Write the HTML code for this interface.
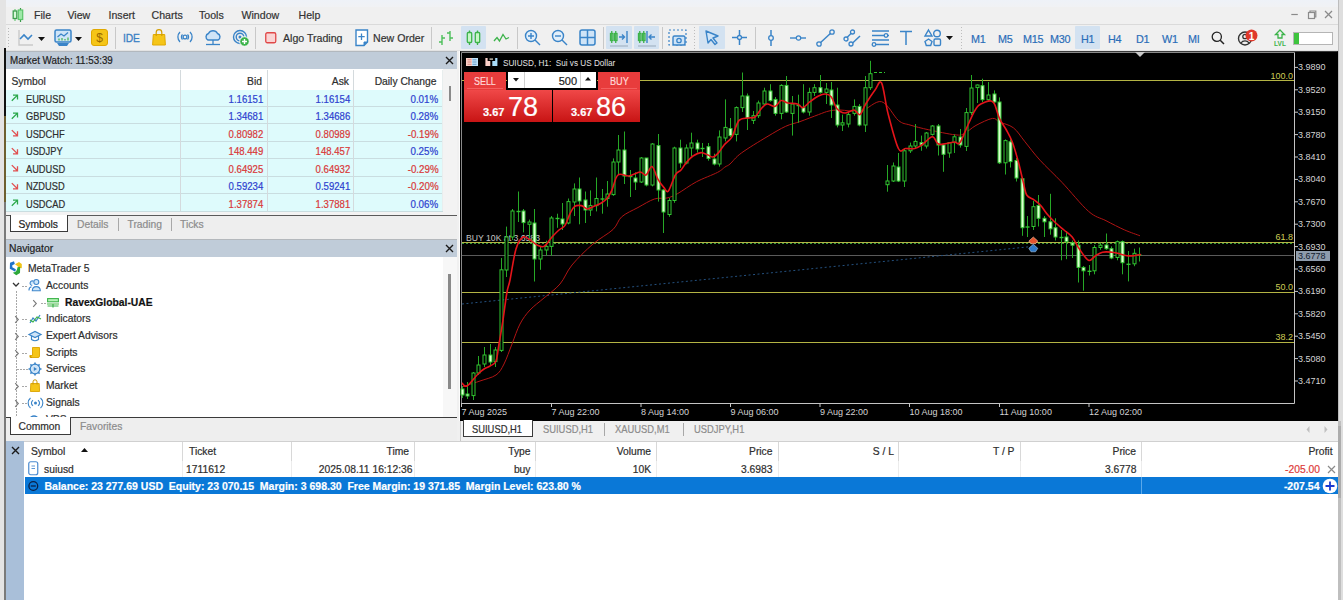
<!DOCTYPE html>
<html><head><meta charset="utf-8"><title>MT5</title>
<style>
html,body{margin:0;padding:0;}
body{width:1343px;height:600px;position:relative;overflow:hidden;background:#f0f0f0;font-family:"Liberation Sans",sans-serif;}
.t{position:absolute;white-space:nowrap;-webkit-text-stroke:0.2px currentColor;}
.b{position:absolute;}
.s{position:absolute;overflow:visible;}
</style></head><body>
<div class="b" style="left:0px;top:0px;width:6px;height:600px;background:#e4e4e4"></div><div class="b" style="left:4px;top:48px;width:2px;height:68px;background:#111"></div><div class="b" style="left:4px;top:116px;width:2px;height:86px;background:#6e5f30"></div><div class="b" style="left:4px;top:202px;width:2px;height:398px;background:#7a7a7a"></div><div class="b" style="left:1338px;top:0px;width:5px;height:600px;background:#dedede"></div><div class="b" style="left:1338px;top:0px;width:1px;height:600px;background:#bdbdbd"></div><div class="b" style="left:1338px;top:421px;width:3px;height:179px;background:#bfbfbf"></div><div class="b" style="left:1338px;top:426px;width:3px;height:72px;background:#acacac"></div><div class="b" style="left:6px;top:0px;width:1332px;height:7px;background:linear-gradient(#eef2f8,#f1f2f4)"></div><div class="b" style="left:6px;top:7px;width:1332px;height:17px;background:#f0f0f0"></div><div class="b" style="left:6px;top:24px;width:1332px;height:1px;background:#dadada"></div><svg class="s" style="left:12px;top:8px;" width="12" height="14" viewBox="0 0 12 14"><line x1="3" y1="1" x2="3" y2="13" stroke="#4fbf5f" stroke-width="1"/><line x1="8.5" y1="0" x2="8.5" y2="14" stroke="#3a9a4a" stroke-width="1.2"/><rect x="1.2" y="3" width="3.6" height="7.5" fill="#d8f8d8" stroke="#3f9f4f" stroke-width="1.3"/><rect x="6.3" y="2" width="4.4" height="9.5" fill="#9fe8a8" stroke="#5cc56a" stroke-width="1.2"/></svg><div class="t" style="left:34px;top:8.00px;font-size:10.6px;line-height:14px;color:#333;font-weight:normal;">File</div><div class="t" style="left:67.5px;top:8.00px;font-size:10.6px;line-height:14px;color:#333;font-weight:normal;">View</div><div class="t" style="left:108.5px;top:8.00px;font-size:10.6px;line-height:14px;color:#333;font-weight:normal;">Insert</div><div class="t" style="left:151.5px;top:8.00px;font-size:10.6px;line-height:14px;color:#333;font-weight:normal;">Charts</div><div class="t" style="left:199px;top:8.00px;font-size:10.6px;line-height:14px;color:#333;font-weight:normal;">Tools</div><div class="t" style="left:241.5px;top:8.00px;font-size:10.6px;line-height:14px;color:#333;font-weight:normal;">Window</div><div class="t" style="left:298.5px;top:8.00px;font-size:10.6px;line-height:14px;color:#333;font-weight:normal;">Help</div><svg class="s" style="left:1288px;top:8px;" width="50" height="14" viewBox="0 0 50 14"><g stroke="#8a8a8a" stroke-width="1.2" fill="none"><line x1="3.3" y1="6.5" x2="9.8" y2="6.5"/><rect x="20.5" y="4.5" width="6" height="6"/><path d="M22 4.5 V3 H27.8 V9 H26.5"/><line x1="37" y1="3" x2="44" y2="10"/><line x1="44" y1="3" x2="37" y2="10"/></g></svg><div class="b" style="left:6px;top:25px;width:1332px;height:26px;background:#f0f0f0"></div><div class="b" style="left:8px;top:28px;width:1px;height:20px;background:repeating-linear-gradient(#b8b8b8 0 1px,transparent 1px 3px)"></div><svg class="s" style="left:17px;top:29px;" width="18" height="18" viewBox="0 0 18 18"><path d="M2 1 V16 H16" fill="none" stroke="#c9c9c9" stroke-width="1.4"/><path d="M3 10 L7 6 L11 10 L15 6" fill="none" stroke="#3a84c8" stroke-width="1.6"/></svg><svg class="s" style="left:38px;top:37px;" width="8" height="5" viewBox="0 0 8 5"><path d="M0 0 H7 L3.5 4 Z" fill="#111"/></svg><svg class="s" style="left:54px;top:29px;" width="18" height="18" viewBox="0 0 18 18"><rect x="1" y="1" width="16" height="12" rx="1.5" fill="#cfe4f7" stroke="#3a84c8" stroke-width="1.5"/><path d="M3 14 H15 L13 17 H5 Z" fill="#3a84c8"/><path d="M3.5 8 L7 5 L10 7 L14 3.5" fill="none" stroke="#3a84c8" stroke-width="1.3"/><g stroke="#3cb34a" stroke-width="1.2"><line x1="5" y1="11.5" x2="5" y2="9.5"/><line x1="8" y1="11.5" x2="8" y2="9"/><line x1="11" y1="11.5" x2="11" y2="10"/><line x1="14" y1="11.5" x2="14" y2="8.5"/></g></svg><svg class="s" style="left:75px;top:37px;" width="8" height="5" viewBox="0 0 8 5"><path d="M0 0 H7 L3.5 4 Z" fill="#111"/></svg><svg class="s" style="left:91px;top:29px;" width="17" height="17" viewBox="0 0 17 17"><rect x="0.5" y="0.5" width="16" height="16" rx="2.5" fill="#f5c518" stroke="#e0a800"/><text x="8.5" y="13" font-family="Liberation Sans" font-size="12" text-anchor="middle" fill="#9a6a00">$</text></svg><div class="b" style="left:115px;top:27px;width:1px;height:22px;background:#c8c8c8"></div><div class="t" style="left:123px;top:31.00px;font-size:10.8px;line-height:14px;color:#3a7fc4;font-weight:normal;letter-spacing:-0.2px;-webkit-text-stroke:0.3px #3a7fc4;transform:scaleX(0.95);transform-origin:left">IDE</div><svg class="s" style="left:152px;top:29px;" width="14" height="17" viewBox="0 0 14 17"><path d="M1.3 5.5 H12.7 L13.4 16 H0.6 Z" fill="#f5c518" stroke="#e0a800"/><path d="M4.2 7 V3.5 A2.8 2.8 0 0 1 9.8 3.5 V7" fill="none" stroke="#d39e00" stroke-width="1.2"/></svg><svg class="s" style="left:176px;top:30px;" width="18" height="14" viewBox="0 0 18 14"><g fill="none" stroke="#3a84c8" stroke-width="1.3"><path d="M4 2 A7 7 0 0 0 4 12"/><path d="M14 2 A7 7 0 0 1 14 12"/><path d="M6.5 4.5 A3.5 3.5 0 0 0 6.5 9.5"/><path d="M11.5 4.5 A3.5 3.5 0 0 1 11.5 9.5"/></g><circle cx="9" cy="7" r="1.9" fill="none" stroke="#3a84c8" stroke-width="1.3"/></svg><svg class="s" style="left:204px;top:29px;" width="18" height="18" viewBox="0 0 18 18"><path d="M4 11 A3.5 3.5 0 0 1 4.5 4.5 A5 5 0 0 1 13.5 4.5 A3.5 3.5 0 0 1 14 11 Z" fill="#cfe4f7" stroke="#3a84c8" stroke-width="1.4"/><g stroke="#3a84c8" stroke-width="1.3"><line x1="9" y1="11" x2="9" y2="15"/><line x1="2" y1="15.5" x2="16" y2="15.5"/></g></svg><svg class="s" style="left:232px;top:29px;" width="18" height="18" viewBox="0 0 18 18"><g fill="none" stroke="#3a84c8" stroke-width="1.4"><circle cx="8" cy="8" r="6.5"/><circle cx="8" cy="8" r="3.8"/></g><circle cx="8" cy="8" r="1.5" fill="#3a84c8"/><circle cx="12.5" cy="12.5" r="4.8" fill="#3cb34a" stroke="#fff" stroke-width="1"/><path d="M12.5 10 V15 M10 12.5 H15" stroke="#fff" stroke-width="1.4"/></svg><div class="b" style="left:255px;top:27px;width:1px;height:22px;background:#c8c8c8"></div><svg class="s" style="left:265px;top:32px;" width="12" height="12" viewBox="0 0 12 12"><rect x="0.75" y="0.75" width="10" height="10" rx="1.5" fill="#fad4d4" stroke="#e04848" stroke-width="1.3"/></svg><div class="t" style="left:283px;top:31.00px;font-size:10.6px;line-height:14px;color:#333;font-weight:normal;">Algo Trading</div><svg class="s" style="left:355px;top:29px;" width="14" height="18" viewBox="0 0 14 18"><path d="M1 1 H12.5 V13 L9 16.5 H1 Z" fill="#fff" stroke="#3a84c8" stroke-width="1.4"/><path d="M9 16.5 V13 H12.5" fill="#3a84c8" stroke="#3a84c8"/><path d="M6.5 4.5 V11 M3.3 7.7 H9.7" stroke="#3a84c8" stroke-width="1.3"/></svg><div class="t" style="left:373px;top:31.00px;font-size:10.6px;line-height:14px;color:#333;font-weight:normal;">New Order</div><div class="b" style="left:431px;top:27px;width:1px;height:22px;background:#c8c8c8"></div><svg class="s" style="left:438px;top:29px;" width="16" height="18" viewBox="0 0 16 18"><g stroke="#4cbf5a" stroke-width="1.4" fill="none"><path d="M4 6 V16 M1 13 H4 M4 9 H7"/><path d="M12 2 V12 M9 4 H12 M12 9 H15"/></g></svg><div class="b" style="left:461px;top:26px;width:25px;height:23px;background:#d3e2f1;border-radius:1px"></div><svg class="s" style="left:466px;top:29px;" width="16" height="18" viewBox="0 0 16 18"><g stroke="#3cb34a" stroke-width="1.3"><line x1="3.5" y1="1.5" x2="3.5" y2="16"/><line x1="11.5" y1="1.5" x2="11.5" y2="16"/><rect x="1.3" y="3.5" width="4.4" height="10" rx="1" fill="#c8f5c8"/><rect x="9.3" y="3.5" width="4.4" height="10" rx="1" fill="#c8f5c8"/></g></svg><svg class="s" style="left:493px;top:31px;" width="17" height="14" viewBox="0 0 17 14"><path d="M1 10 L4 6.5 L6.5 10 L10 3.5 L13 8 L16 6.5" fill="none" stroke="#3cb34a" stroke-width="1.3"/></svg><div class="b" style="left:517px;top:27px;width:1px;height:22px;background:#c8c8c8"></div><svg class="s" style="left:524px;top:29px;" width="18" height="18" viewBox="0 0 18 18"><g stroke="#3a84c8" stroke-width="1.4"><circle cx="7" cy="7" r="5.5" fill="#e2effa"/><line x1="11" y1="11" x2="16" y2="16"/><path d="M7 4 V10 M4 7 H10"/></g></svg><svg class="s" style="left:551px;top:29px;" width="18" height="18" viewBox="0 0 18 18"><g stroke="#3a84c8" stroke-width="1.4"><circle cx="7" cy="7" r="5.5" fill="#e2effa"/><line x1="11" y1="11" x2="16" y2="16"/><path d="M4 7 H10"/></g></svg><svg class="s" style="left:579px;top:29px;" width="17" height="17" viewBox="0 0 17 17"><rect x="1" y="1" width="15" height="15" rx="2" fill="#cfe4f7" stroke="#3a84c8" stroke-width="1.5"/><path d="M8.5 1 V16 M1 8.5 H16" stroke="#3a84c8" stroke-width="1.5"/></svg><div class="b" style="left:603px;top:27px;width:1px;height:22px;background:#c8c8c8"></div><div class="b" style="left:606px;top:26px;width:26px;height:23px;background:#d3e2f1;border-radius:1px"></div><svg class="s" style="left:609px;top:29px;" width="20" height="18" viewBox="0 0 20 18"><g stroke="#3cb34a" stroke-width="1.3" fill="none"><rect x="1.5" y="4.5" width="2.5" height="7"/><rect x="5.5" y="4.5" width="2.5" height="7"/><line x1="2.75" y1="2" x2="2.75" y2="14"/><line x1="6.75" y1="2" x2="6.75" y2="14"/></g><g stroke="#3a84c8" stroke-width="1.4" fill="none"><path d="M10 8 H15 M13 5.5 L15.5 8 L13 10.5"/><line x1="18" y1="2" x2="18" y2="14"/></g><line x1="1" y1="17" x2="19" y2="17" stroke="#9ab" stroke-width="1"/></svg><div class="b" style="left:634px;top:26px;width:25px;height:23px;background:#d3e2f1;border-radius:1px"></div><svg class="s" style="left:637px;top:29px;" width="20" height="18" viewBox="0 0 20 18"><g stroke="#3cb34a" stroke-width="1.3" fill="none"><rect x="1.5" y="4.5" width="2.5" height="7"/><rect x="5.5" y="4.5" width="2.5" height="7"/><line x1="2.75" y1="2" x2="2.75" y2="14"/><line x1="6.75" y1="2" x2="6.75" y2="14"/></g><g stroke="#3a84c8" stroke-width="1.4" fill="none"><line x1="10" y1="2" x2="10" y2="14"/><path d="M12 8 H18 M14.5 5.5 L12 8 L14.5 10.5"/></g><line x1="1" y1="17" x2="19" y2="17" stroke="#9ab" stroke-width="1"/></svg><div class="b" style="left:662px;top:27px;width:1px;height:22px;background:#c8c8c8"></div><svg class="s" style="left:668px;top:29px;" width="20" height="18" viewBox="0 0 20 18"><rect x="1" y="1" width="17" height="15" fill="none" stroke="#3a84c8" stroke-width="1.2" stroke-dasharray="2 2"/><rect x="5" y="7" width="12" height="9" rx="1.5" fill="#cfe4f7" stroke="#3a84c8" stroke-width="1.4"/><circle cx="11" cy="11.5" r="2.2" fill="none" stroke="#3a84c8" stroke-width="1.3"/></svg><div class="b" style="left:694px;top:27px;width:1px;height:22px;background:repeating-linear-gradient(#bdbdbd 0 1px,transparent 1px 3px)"></div><div class="b" style="left:699px;top:26px;width:26px;height:23px;background:#d3e2f1;border-radius:1px"></div><svg class="s" style="left:704px;top:29px;" width="16" height="18" viewBox="0 0 16 18"><path d="M2 2 L14 7 L9 9 L13 14 L11 15.5 L7 10.5 L4 14 Z" fill="#cfe4f7" stroke="#3a84c8" stroke-width="1.4" stroke-linejoin="round"/></svg><svg class="s" style="left:731px;top:29px;" width="17" height="17" viewBox="0 0 17 17"><path d="M8.5 1 V16 M1 8.5 H16" stroke="#3a84c8" stroke-width="1.5"/><circle cx="8.5" cy="8.5" r="2" fill="#f0f0f0" stroke="#3a84c8" stroke-width="1.3"/></svg><div class="b" style="left:755px;top:27px;width:1px;height:22px;background:#c8c8c8"></div><svg class="s" style="left:764px;top:29px;" width="14" height="18" viewBox="0 0 14 18"><line x1="7" y1="1" x2="7" y2="17" stroke="#3a84c8" stroke-width="1.5"/><circle cx="7" cy="9" r="2.3" fill="#f0f0f0" stroke="#3a84c8" stroke-width="1.3"/></svg><svg class="s" style="left:790px;top:31px;" width="16" height="14" viewBox="0 0 16 14"><line x1="0" y1="7" x2="16" y2="7" stroke="#3a84c8" stroke-width="1.4"/><circle cx="8.5" cy="7" r="2.2" fill="#f0f0f0" stroke="#3a84c8" stroke-width="1.2"/></svg><svg class="s" style="left:816px;top:29px;" width="19" height="18" viewBox="0 0 19 18"><line x1="3" y1="15" x2="16" y2="3" stroke="#3a84c8" stroke-width="1.5"/><circle cx="3" cy="15" r="2.2" fill="#f0f0f0" stroke="#3a84c8" stroke-width="1.3"/><circle cx="16" cy="3" r="2.2" fill="#f0f0f0" stroke="#3a84c8" stroke-width="1.3"/></svg><svg class="s" style="left:843px;top:29px;" width="19" height="18" viewBox="0 0 19 18"><g stroke="#3a84c8" stroke-width="1.5"><line x1="2.5" y1="10" x2="10" y2="2.5"/><line x1="8" y1="15.5" x2="17" y2="7"/></g><g fill="#f0f0f0" stroke="#3a84c8" stroke-width="1.3"><circle cx="3" cy="10" r="2"/><circle cx="9.5" cy="3" r="2"/><circle cx="8" cy="15" r="2"/></g></svg><svg class="s" style="left:871px;top:29px;" width="19" height="18" viewBox="0 0 19 18"><g stroke="#3a84c8" stroke-width="1.5"><line x1="1" y1="2" x2="18" y2="2"/><line x1="1" y1="6.5" x2="18" y2="6.5"/><line x1="1" y1="11" x2="18" y2="11"/><line x1="1" y1="15.5" x2="18" y2="15.5"/></g><g fill="#f0f0f0" stroke="#3a84c8" stroke-width="1.3"><circle cx="15" cy="6.5" r="1.8"/><circle cx="3" cy="15.5" r="1.8"/></g></svg><svg class="s" style="left:899px;top:30px;" width="14" height="16" viewBox="0 0 14 16"><path d="M1 1.5 H13 M7 1.5 V15" stroke="#3a84c8" stroke-width="1.5"/></svg><svg class="s" style="left:924px;top:29px;" width="18" height="18" viewBox="0 0 18 18"><g fill="none" stroke="#3a84c8" stroke-width="1.4"><path d="M4.5 1 L8 7 H1 Z"/><circle cx="13" cy="4.5" r="3.3"/><path d="M4.5 10 L8 12.5 L6.7 16.5 H2.3 L1 12.5 Z"/><rect x="10" y="10" width="6.5" height="6.5" rx="1.2"/></g></svg><svg class="s" style="left:946px;top:36px;" width="8" height="5" viewBox="0 0 8 5"><path d="M0 0 H7 L3.5 4 Z" fill="#111"/></svg><div class="b" style="left:961px;top:27px;width:1px;height:22px;background:repeating-linear-gradient(#bdbdbd 0 1px,transparent 1px 3px)"></div><div class="b" style="left:1075px;top:26px;width:25px;height:23px;background:#d3e2f1;border-radius:1px"></div><div class="t" style="left:971px;top:31.50px;font-size:10.8px;line-height:14px;color:#2a6db8;font-weight:normal;letter-spacing:-0.2px">M1</div><div class="t" style="left:998px;top:31.50px;font-size:10.8px;line-height:14px;color:#2a6db8;font-weight:normal;letter-spacing:-0.2px">M5</div><div class="t" style="left:1023px;top:31.50px;font-size:10.8px;line-height:14px;color:#2a6db8;font-weight:normal;letter-spacing:-0.2px">M15</div><div class="t" style="left:1050px;top:31.50px;font-size:10.8px;line-height:14px;color:#2a6db8;font-weight:normal;letter-spacing:-0.2px">M30</div><div class="t" style="left:1081px;top:31.50px;font-size:10.8px;line-height:14px;color:#2a6db8;font-weight:normal;letter-spacing:-0.2px">H1</div><div class="t" style="left:1108px;top:31.50px;font-size:10.8px;line-height:14px;color:#2a6db8;font-weight:normal;letter-spacing:-0.2px">H4</div><div class="t" style="left:1136px;top:31.50px;font-size:10.8px;line-height:14px;color:#2a6db8;font-weight:normal;letter-spacing:-0.2px">D1</div><div class="t" style="left:1162px;top:31.50px;font-size:10.8px;line-height:14px;color:#2a6db8;font-weight:normal;letter-spacing:-0.2px">W1</div><div class="t" style="left:1188px;top:31.50px;font-size:10.8px;line-height:14px;color:#2a6db8;font-weight:normal;letter-spacing:-0.2px">MI</div><svg class="s" style="left:1211px;top:31px;" width="14" height="14" viewBox="0 0 14 14"><circle cx="5.8" cy="5.8" r="4.6" fill="none" stroke="#222" stroke-width="1.3"/><line x1="9.2" y1="9.2" x2="13" y2="13" stroke="#222" stroke-width="1.5"/></svg><svg class="s" style="left:1237px;top:29px;" width="24" height="18" viewBox="0 0 24 18"><circle cx="8" cy="9.5" r="6.5" fill="none" stroke="#333" stroke-width="1.4"/><circle cx="8" cy="7.5" r="2.2" fill="none" stroke="#333" stroke-width="1.3"/><path d="M4 14 A4.5 4 0 0 1 12 14" fill="none" stroke="#333" stroke-width="1.3"/><circle cx="14.5" cy="6.5" r="6" fill="#e0392b"/><text x="14.5" y="10.5" font-family="Liberation Sans" font-size="10" font-weight="bold" text-anchor="middle" fill="#fff">1</text></svg><svg class="s" style="left:1273px;top:29px;" width="14" height="18" viewBox="0 0 14 18"><path d="M7 1 L11.5 5.5 H9 V9 H5 V5.5 H2.5 Z" fill="none" stroke="#3cb34a" stroke-width="1.3"/><text x="7" y="16.5" font-family="Liberation Sans" font-size="6.5" font-weight="bold" text-anchor="middle" fill="#3cb34a">LVL</text></svg><div class="b" style="left:1293px;top:32px;width:38px;height:11px;background:#fff;border:1px solid #b5b5b5"></div><div class="b" style="left:1294px;top:33px;width:5px;height:11px;background:#3ec43e"></div><div class="b" style="left:6px;top:50px;width:1332px;height:1px;background:#e3e3e3"></div><div class="b" style="left:6px;top:51px;width:451px;height:19px;background:#c0ccd9"></div><div class="b" style="left:6px;top:51px;width:451px;height:1px;background:#b2b8be"></div><div class="t" style="left:9.5px;top:54.20px;font-size:10.3px;line-height:14px;color:#1e1e1e;font-weight:normal;transform:scaleX(0.95);transform-origin:left center;">Market Watch: 11:53:39</div><svg class="s" style="left:445px;top:56px;" width="9" height="9" viewBox="0 0 9 9"><path d="M1 1 L8 8 M8 1 L1 8" stroke="#1a1a1a" stroke-width="1.4"/></svg><div class="b" style="left:6px;top:69px;width:451px;height:146px;background:#f3f3f3"></div><div class="b" style="left:6px;top:69px;width:437px;height:20.5px;background:#fff"></div><div class="b" style="left:6px;top:89.5px;width:437px;height:122px;background:#defbfc"></div><div class="b" style="left:6px;top:106px;width:437px;height:1px;background:#c9dde0"></div><svg class="s" style="left:10px;top:93.3px;" width="10" height="10" viewBox="0 0 10 10"><path d="M1.8 7.8 L7.5 2.1 M3 2.1 H7.5 V6.6" fill="none" stroke="#2aa84a" stroke-width="1.3"/></svg><div class="t" style="left:25.8px;top:92.80px;font-size:10.3px;line-height:14px;color:#2e2e2e;font-weight:normal;transform:scaleX(0.9);transform-origin:left center;">EURUSD</div><div class="t" style="right:1079.5px;top:92.80px;font-size:10.3px;line-height:14px;color:#2d3fcf;font-weight:normal;transform:scaleX(0.93);transform-origin:right center;">1.16151</div><div class="t" style="right:992.5px;top:92.80px;font-size:10.3px;line-height:14px;color:#2d3fcf;font-weight:normal;transform:scaleX(0.93);transform-origin:right center;">1.16154</div><div class="t" style="right:904.5px;top:92.80px;font-size:10.3px;line-height:14px;color:#2d3fcf;font-weight:normal;transform:scaleX(0.95);transform-origin:right center;">0.01%</div><div class="b" style="left:6px;top:123px;width:437px;height:1px;background:#c9dde0"></div><svg class="s" style="left:10px;top:110.75px;" width="10" height="10" viewBox="0 0 10 10"><path d="M1.8 7.8 L7.5 2.1 M3 2.1 H7.5 V6.6" fill="none" stroke="#2aa84a" stroke-width="1.3"/></svg><div class="t" style="left:25.8px;top:110.25px;font-size:10.3px;line-height:14px;color:#2e2e2e;font-weight:normal;transform:scaleX(0.9);transform-origin:left center;">GBPUSD</div><div class="t" style="right:1079.5px;top:110.25px;font-size:10.3px;line-height:14px;color:#2d3fcf;font-weight:normal;transform:scaleX(0.93);transform-origin:right center;">1.34681</div><div class="t" style="right:992.5px;top:110.25px;font-size:10.3px;line-height:14px;color:#2d3fcf;font-weight:normal;transform:scaleX(0.93);transform-origin:right center;">1.34686</div><div class="t" style="right:904.5px;top:110.25px;font-size:10.3px;line-height:14px;color:#2d3fcf;font-weight:normal;transform:scaleX(0.95);transform-origin:right center;">0.28%</div><div class="b" style="left:6px;top:141px;width:437px;height:1px;background:#c9dde0"></div><svg class="s" style="left:10px;top:128.20000000000002px;" width="10" height="10" viewBox="0 0 10 10"><path d="M1.8 2.1 L7.5 7.8 M3 7.8 H7.5 V3.3" fill="none" stroke="#e05050" stroke-width="1.3"/></svg><div class="t" style="left:25.8px;top:127.70px;font-size:10.3px;line-height:14px;color:#2e2e2e;font-weight:normal;transform:scaleX(0.9);transform-origin:left center;">USDCHF</div><div class="t" style="right:1079.5px;top:127.70px;font-size:10.3px;line-height:14px;color:#d93838;font-weight:normal;transform:scaleX(0.93);transform-origin:right center;">0.80982</div><div class="t" style="right:992.5px;top:127.70px;font-size:10.3px;line-height:14px;color:#d93838;font-weight:normal;transform:scaleX(0.93);transform-origin:right center;">0.80989</div><div class="t" style="right:904.5px;top:127.70px;font-size:10.3px;line-height:14px;color:#d93838;font-weight:normal;transform:scaleX(0.95);transform-origin:right center;">-0.19%</div><div class="b" style="left:6px;top:158px;width:437px;height:1px;background:#c9dde0"></div><svg class="s" style="left:10px;top:145.65px;" width="10" height="10" viewBox="0 0 10 10"><path d="M1.8 2.1 L7.5 7.8 M3 7.8 H7.5 V3.3" fill="none" stroke="#e05050" stroke-width="1.3"/></svg><div class="t" style="left:25.8px;top:145.15px;font-size:10.3px;line-height:14px;color:#2e2e2e;font-weight:normal;transform:scaleX(0.9);transform-origin:left center;">USDJPY</div><div class="t" style="right:1079.5px;top:145.15px;font-size:10.3px;line-height:14px;color:#d93838;font-weight:normal;transform:scaleX(0.93);transform-origin:right center;">148.449</div><div class="t" style="right:992.5px;top:145.15px;font-size:10.3px;line-height:14px;color:#d93838;font-weight:normal;transform:scaleX(0.93);transform-origin:right center;">148.457</div><div class="t" style="right:904.5px;top:145.15px;font-size:10.3px;line-height:14px;color:#2d3fcf;font-weight:normal;transform:scaleX(0.95);transform-origin:right center;">0.25%</div><div class="b" style="left:6px;top:176px;width:437px;height:1px;background:#c9dde0"></div><svg class="s" style="left:10px;top:163.10000000000002px;" width="10" height="10" viewBox="0 0 10 10"><path d="M1.8 2.1 L7.5 7.8 M3 7.8 H7.5 V3.3" fill="none" stroke="#e05050" stroke-width="1.3"/></svg><div class="t" style="left:25.8px;top:162.60px;font-size:10.3px;line-height:14px;color:#2e2e2e;font-weight:normal;transform:scaleX(0.9);transform-origin:left center;">AUDUSD</div><div class="t" style="right:1079.5px;top:162.60px;font-size:10.3px;line-height:14px;color:#d93838;font-weight:normal;transform:scaleX(0.93);transform-origin:right center;">0.64925</div><div class="t" style="right:992.5px;top:162.60px;font-size:10.3px;line-height:14px;color:#d93838;font-weight:normal;transform:scaleX(0.93);transform-origin:right center;">0.64932</div><div class="t" style="right:904.5px;top:162.60px;font-size:10.3px;line-height:14px;color:#d93838;font-weight:normal;transform:scaleX(0.95);transform-origin:right center;">-0.29%</div><div class="b" style="left:6px;top:193px;width:437px;height:1px;background:#c9dde0"></div><svg class="s" style="left:10px;top:180.55px;" width="10" height="10" viewBox="0 0 10 10"><path d="M1.8 2.1 L7.5 7.8 M3 7.8 H7.5 V3.3" fill="none" stroke="#e05050" stroke-width="1.3"/></svg><div class="t" style="left:25.8px;top:180.05px;font-size:10.3px;line-height:14px;color:#2e2e2e;font-weight:normal;transform:scaleX(0.9);transform-origin:left center;">NZDUSD</div><div class="t" style="right:1079.5px;top:180.05px;font-size:10.3px;line-height:14px;color:#2d3fcf;font-weight:normal;transform:scaleX(0.93);transform-origin:right center;">0.59234</div><div class="t" style="right:992.5px;top:180.05px;font-size:10.3px;line-height:14px;color:#2d3fcf;font-weight:normal;transform:scaleX(0.93);transform-origin:right center;">0.59241</div><div class="t" style="right:904.5px;top:180.05px;font-size:10.3px;line-height:14px;color:#d93838;font-weight:normal;transform:scaleX(0.95);transform-origin:right center;">-0.20%</div><div class="b" style="left:6px;top:211px;width:437px;height:1px;background:#c9dde0"></div><svg class="s" style="left:10px;top:198.0px;" width="10" height="10" viewBox="0 0 10 10"><path d="M1.8 7.8 L7.5 2.1 M3 2.1 H7.5 V6.6" fill="none" stroke="#2aa84a" stroke-width="1.3"/></svg><div class="t" style="left:25.8px;top:197.50px;font-size:10.3px;line-height:14px;color:#2e2e2e;font-weight:normal;transform:scaleX(0.9);transform-origin:left center;">USDCAD</div><div class="t" style="right:1079.5px;top:197.50px;font-size:10.3px;line-height:14px;color:#d93838;font-weight:normal;transform:scaleX(0.93);transform-origin:right center;">1.37874</div><div class="t" style="right:992.5px;top:197.50px;font-size:10.3px;line-height:14px;color:#d93838;font-weight:normal;transform:scaleX(0.93);transform-origin:right center;">1.37881</div><div class="t" style="right:904.5px;top:197.50px;font-size:10.3px;line-height:14px;color:#2d3fcf;font-weight:normal;transform:scaleX(0.95);transform-origin:right center;">0.06%</div><div class="b" style="left:180px;top:70px;width:1px;height:141px;background:#d4dadd"></div><div class="b" style="left:267px;top:70px;width:1px;height:141px;background:#d4dadd"></div><div class="b" style="left:353px;top:70px;width:1px;height:141px;background:#d4dadd"></div><div class="b" style="left:442px;top:70px;width:1px;height:141px;background:#e8eeee"></div><div class="t" style="left:11.5px;top:75.00px;font-size:10.3px;line-height:14px;color:#2e2e2e;font-weight:normal;">Symbol</div><div class="t" style="right:1081px;top:75.00px;font-size:10.3px;line-height:14px;color:#2e2e2e;font-weight:normal;">Bid</div><div class="t" style="right:994px;top:75.00px;font-size:10.3px;line-height:14px;color:#2e2e2e;font-weight:normal;">Ask</div><div class="t" style="right:906.5px;top:75.00px;font-size:10.3px;line-height:14px;color:#2e2e2e;font-weight:normal;">Daily Change</div><div class="b" style="left:449px;top:86px;width:2px;height:15px;background:#8a8a8a"></div><div class="b" style="left:6px;top:215px;width:451px;height:24px;background:#eeeeee"></div><div class="b" style="left:6px;top:215px;width:451px;height:1px;background:#5a5a5a"></div><div class="b" style="left:10px;top:215px;width:56px;height:16px;background:#fff;border:1px solid #3a3a3a;border-top:none"></div><div class="t" style="left:18.5px;top:218.00px;font-size:10.3px;line-height:14px;color:#1e1e1e;font-weight:normal;">Symbols</div><div class="t" style="left:77px;top:218.00px;font-size:10.3px;line-height:14px;color:#8c8c8c;font-weight:normal;">Details</div><div class="b" style="left:118px;top:218px;width:1px;height:13px;background:#a8a8a8"></div><div class="t" style="left:127.5px;top:218.00px;font-size:10.3px;line-height:14px;color:#8c8c8c;font-weight:normal;">Trading</div><div class="b" style="left:171px;top:218px;width:1px;height:13px;background:#a8a8a8"></div><div class="t" style="left:180px;top:218.00px;font-size:10.3px;line-height:14px;color:#8c8c8c;font-weight:normal;">Ticks</div><div class="b" style="left:6px;top:239px;width:451px;height:18.5px;background:#c0ccd9"></div><div class="b" style="left:6px;top:239px;width:451px;height:1px;background:#b4b8bc"></div><div class="t" style="left:9px;top:242.00px;font-size:10.3px;line-height:14px;color:#1e1e1e;font-weight:normal;">Navigator</div><svg class="s" style="left:445px;top:244px;" width="9" height="9" viewBox="0 0 9 9"><path d="M1 1 L8 8 M8 1 L1 8" stroke="#1a1a1a" stroke-width="1.4"/></svg><div class="b" style="left:6px;top:257px;width:451px;height:160px;background:#fff"></div><div class="b" style="left:443px;top:257px;width:14px;height:160px;background:#f7f7f7"></div><div class="b" style="left:448px;top:274px;width:3px;height:115px;background:#8a8a8a"></div><div class="b" style="left:16px;top:291px;width:1px;height:126px;background:repeating-linear-gradient(#a8a8a8 0 2px,transparent 2px 3px)"></div><svg class="s" style="left:6px;top:259px;" width="20" height="20" viewBox="0 0 20 20"><path d="M4 3.8 L8 2.3 L8.8 5 L6.3 6.3 L6.3 8.3 L9.8 10.3 L9.3 12.8 L3.8 9.8 Z" fill="#1f73c9"/><path d="M9 5.2 L13 3 L15.8 5 L15.8 9.3 L13 8.8 L11 6.8 Z" fill="#f0c419"/><path d="M11.5 8.3 L14.2 7.8 L14 14 L10.3 16.2 L6.8 13.8 L9.8 12.8 L11 10.5 Z" fill="#2ea83a"/></svg><div class="t" style="left:28px;top:262.00px;font-size:10.3px;line-height:14px;color:#2e2e2e;font-weight:normal;">MetaTrader 5</div><svg class="s" style="left:11.5px;top:282.3px;" width="9" height="6" viewBox="0 0 9 6"><path d="M1 1 L4 4 L7 1" fill="none" stroke="#333" stroke-width="1.3"/></svg><div class="b" style="left:22px;top:285.8px;width:6px;height:1px;background:repeating-linear-gradient(90deg,#a8a8a8 0 2px,transparent 2px 3px)"></div><svg class="s" style="left:28px;top:277.8px;" width="14" height="14" viewBox="0 0 14 14"><g stroke="#3f86cc" stroke-width="1.1"><path d="M4.2 7.5 A2.3 2.3 0 1 1 5.5 3.2" fill="#cde6fa"/><path d="M1 12.5 A3.5 3.5 0 0 1 3.5 8.8" fill="none"/><circle cx="8.3" cy="4" r="2.5" fill="#cde6fa"/><path d="M4.3 12.8 Q4.3 8.6 8.3 8.6 Q12.3 8.6 12.3 12.8 Z" fill="#cde6fa"/></g></svg><div class="t" style="left:46px;top:278.80px;font-size:10.3px;line-height:14px;color:#2e2e2e;font-weight:normal;">Accounts</div><svg class="s" style="left:32px;top:298.5px;" width="6" height="9" viewBox="0 0 6 9"><path d="M1.2 1.2 L4.3 4.5 L1.2 7.8" fill="none" stroke="#7a7a7a" stroke-width="1.1"/></svg><div class="b" style="left:41px;top:302.5px;width:5px;height:1px;background:repeating-linear-gradient(90deg,#a8a8a8 0 2px,transparent 2px 3px)"></div><svg class="s" style="left:47px;top:297.5px;" width="12" height="10" viewBox="0 0 12 10"><rect x="0.6" y="0.6" width="10.8" height="3.2" fill="#b6f2b6" stroke="#3cb34a" stroke-width="1.1"/><line x1="0" y1="6" x2="12" y2="6" stroke="#55c055" stroke-width="1.1"/><line x1="0.5" y1="8" x2="11.5" y2="8" stroke="#3cb34a" stroke-width="1"/><line x1="6" y1="6" x2="6" y2="9.5" stroke="#3cb34a" stroke-width="1.2"/></svg><div class="t" style="left:65px;top:295.50px;font-size:10.3px;line-height:14px;color:#111;font-weight:bold;">RavexGlobal-UAE</div><svg class="s" style="left:13.5px;top:315.2px;" width="6" height="9" viewBox="0 0 6 9"><path d="M1.2 1.2 L4.3 4.5 L1.2 7.8" fill="none" stroke="#7a7a7a" stroke-width="1.1"/></svg><div class="b" style="left:22px;top:319.2px;width:6px;height:1px;background:repeating-linear-gradient(90deg,#a8a8a8 0 2px,transparent 2px 3px)"></div><svg class="s" style="left:29px;top:313.2px;" width="13" height="12" viewBox="0 0 13 12"><path d="M1 10 L4 5 L7 8 L11 2" fill="none" stroke="#3a84c8" stroke-width="1.2"/><path d="M1 7 L4 9 L8 4 L12 6" fill="none" stroke="#3cb34a" stroke-width="1.1"/></svg><div class="t" style="left:46px;top:312.20px;font-size:10.3px;line-height:14px;color:#2e2e2e;font-weight:normal;">Indicators</div><svg class="s" style="left:13.5px;top:332px;" width="6" height="9" viewBox="0 0 6 9"><path d="M1.2 1.2 L4.3 4.5 L1.2 7.8" fill="none" stroke="#7a7a7a" stroke-width="1.1"/></svg><div class="b" style="left:22px;top:336.0px;width:6px;height:1px;background:repeating-linear-gradient(90deg,#a8a8a8 0 2px,transparent 2px 3px)"></div><svg class="s" style="left:28px;top:330px;" width="14" height="12" viewBox="0 0 14 12"><path d="M1 4.5 L7 1.5 L13 4.5 L7 7.5 Z" fill="#cfe4f7" stroke="#3a84c8" stroke-width="1.2"/><path d="M3.5 6 V9.5 Q7 12 10.5 9.5 V6" fill="none" stroke="#3a84c8" stroke-width="1.2"/></svg><div class="t" style="left:46px;top:329.00px;font-size:10.3px;line-height:14px;color:#2e2e2e;font-weight:normal;">Expert Advisors</div><svg class="s" style="left:13.5px;top:348.7px;" width="6" height="9" viewBox="0 0 6 9"><path d="M1.2 1.2 L4.3 4.5 L1.2 7.8" fill="none" stroke="#7a7a7a" stroke-width="1.1"/></svg><div class="b" style="left:22px;top:352.7px;width:6px;height:1px;background:repeating-linear-gradient(90deg,#a8a8a8 0 2px,transparent 2px 3px)"></div><svg class="s" style="left:29px;top:346.7px;" width="12" height="12" viewBox="0 0 12 12"><path d="M3.5 0.5 H10.5 V9 Q10.5 10.5 9 10.5 H1 V8.5 H3.5 Z" fill="#f5c518" stroke="#dba400" stroke-width="0.9"/><path d="M1 8.5 Q1 10.5 3 10.5" fill="none" stroke="#c89400" stroke-width="1"/></svg><div class="t" style="left:46px;top:345.70px;font-size:10.3px;line-height:14px;color:#2e2e2e;font-weight:normal;">Scripts</div><div class="b" style="left:17px;top:369.4px;width:11px;height:1px;background:repeating-linear-gradient(90deg,#a8a8a8 0 2px,transparent 2px 3px)"></div><svg class="s" style="left:28px;top:362.4px;" width="14" height="14" viewBox="0 0 14 14"><circle cx="7" cy="7" r="4.8" fill="#cfe4f7" stroke="#3a84c8" stroke-width="1.2"/><g stroke="#3a84c8" stroke-width="1.6"><path d="M7 0.5 V2.5 M7 11.5 V13.5 M0.5 7 H2.5 M11.5 7 H13.5 M2.4 2.4 L3.8 3.8 M10.2 10.2 L11.6 11.6 M11.6 2.4 L10.2 3.8 M3.8 10.2 L2.4 11.6"/></g><path d="M5.8 5 L9 7 L5.8 9 Z" fill="#3a84c8"/></svg><div class="t" style="left:46px;top:362.40px;font-size:10.3px;line-height:14px;color:#2e2e2e;font-weight:normal;">Services</div><svg class="s" style="left:13.5px;top:382.2px;" width="6" height="9" viewBox="0 0 6 9"><path d="M1.2 1.2 L4.3 4.5 L1.2 7.8" fill="none" stroke="#7a7a7a" stroke-width="1.1"/></svg><div class="b" style="left:22px;top:386.2px;width:6px;height:1px;background:repeating-linear-gradient(90deg,#a8a8a8 0 2px,transparent 2px 3px)"></div><svg class="s" style="left:30px;top:379.2px;" width="10" height="13" viewBox="0 0 10 13"><path d="M0.8 4.5 H9.2 L9.6 12.5 H0.4 Z" fill="#f5c518" stroke="#dba400" stroke-width="0.9"/><path d="M3 5.5 V2.8 A2 2 0 0 1 7 2.8 V5.5" fill="none" stroke="#c89400" stroke-width="1"/></svg><div class="t" style="left:46px;top:379.20px;font-size:10.3px;line-height:14px;color:#2e2e2e;font-weight:normal;">Market</div><svg class="s" style="left:13.5px;top:399px;" width="6" height="9" viewBox="0 0 6 9"><path d="M1.2 1.2 L4.3 4.5 L1.2 7.8" fill="none" stroke="#7a7a7a" stroke-width="1.1"/></svg><div class="b" style="left:22px;top:403.0px;width:6px;height:1px;background:repeating-linear-gradient(90deg,#a8a8a8 0 2px,transparent 2px 3px)"></div><svg class="s" style="left:27px;top:397px;" width="17" height="12" viewBox="0 0 17 12"><g fill="none" stroke="#3a84c8" stroke-width="1.1"><path d="M3.5 1 A6.5 6.5 0 0 0 3.5 11"/><path d="M13.5 1 A6.5 6.5 0 0 1 13.5 11"/><path d="M6 3.2 A3.3 3.3 0 0 0 6 8.8"/><path d="M11 3.2 A3.3 3.3 0 0 1 11 8.8"/></g><circle cx="8.5" cy="6" r="1.5" fill="#3a84c8"/></svg><div class="t" style="left:46px;top:396.00px;font-size:10.3px;line-height:14px;color:#2e2e2e;font-weight:normal;">Signals</div><svg class="s" style="left:13.5px;top:415.6px;" width="6" height="9" viewBox="0 0 6 9"><path d="M1.2 1.2 L4.3 4.5 L1.2 7.8" fill="none" stroke="#7a7a7a" stroke-width="1.1"/></svg><div class="b" style="left:22px;top:419.6px;width:6px;height:1px;background:repeating-linear-gradient(90deg,#a8a8a8 0 2px,transparent 2px 3px)"></div><svg class="s" style="left:27px;top:412.6px;" width="14" height="10" viewBox="0 0 14 10"><path d="M1.5 7 Q7 -1 12.5 7" fill="#cfe4f7" stroke="#3a84c8" stroke-width="1.3"/></svg><div class="t" style="left:46px;top:412.60px;font-size:10.3px;line-height:14px;color:#2e2e2e;font-weight:normal;">VPS</div><div class="b" style="left:6px;top:417px;width:451px;height:24px;background:#eeeeee"></div><div class="b" style="left:6px;top:417px;width:451px;height:1px;background:#3a3a3a"></div><div class="b" style="left:10px;top:417px;width:59px;height:17px;background:#fff;border:1px solid #3a3a3a;border-top:none"></div><div class="t" style="left:18.5px;top:420.00px;font-size:10.3px;line-height:14px;color:#2e2e2e;font-weight:normal;">Common</div><div class="t" style="left:80px;top:420.00px;font-size:10.3px;line-height:14px;color:#8c8c8c;font-weight:normal;">Favorites</div><div class="b" style="left:457px;top:51px;width:3px;height:390px;background:#f0f0f0"></div><div class="b" style="left:459px;top:51px;width:1px;height:370px;background:#fcfcfc"></div><div class="b" style="left:460px;top:51px;width:878px;height:370px;overflow:hidden;background:#000"><svg width="878" height="370" viewBox="460 51 878 370" style="position:absolute;left:0;top:0"><rect x="0" y="0" width="1343" height="600" fill="#000"/><path d="M1294.5 52.5 V403.5 H461.5" fill="none" stroke="#c4c4c4" stroke-width="1"/><path d="M461.5 403.5 V52.5 H1294.5" fill="none" stroke="#8a8a8a" stroke-width="1"/><path d="M460.5 51.5 H1337.5" stroke="#3a3a3a" stroke-width="1"/><line x1="462" y1="80.5" x2="1294" y2="80.5" stroke="#b4b444" stroke-width="1"/><line x1="462" y1="242.5" x2="1294" y2="242.5" stroke="#b4b444" stroke-width="1"/><line x1="462" y1="292.5" x2="1294" y2="292.5" stroke="#b4b444" stroke-width="1"/><line x1="462" y1="342.5" x2="1294" y2="342.5" stroke="#b4b444" stroke-width="1"/><line x1="462" y1="243.5" x2="1294" y2="243.5" stroke="#3a9a3a" stroke-width="1" stroke-dasharray="2 2"/><line x1="462" y1="255.5" x2="1294" y2="255.5" stroke="#5a5a5a" stroke-width="1.2"/><line x1="462" y1="304" x2="1032" y2="246.5" stroke="#24507e" stroke-width="1" stroke-dasharray="2 2.5"/><text x="466" y="241" font-family="Liberation Sans" font-size="9" fill="#c4c4c4" textLength="74" lengthAdjust="spacingAndGlyphs">BUY 10K at 3.6983</text><path d="M462,387 C463.0,386.7 465.0,386.0 468,385 C471.0,384.0 475.3,382.7 480,381 C484.7,379.3 492.0,377.8 496,375 C500.0,372.2 501.3,369.2 504,364 C506.7,358.8 509.3,350.7 512,344 C514.7,337.3 517.0,329.7 520,324 C523.0,318.3 526.0,314.3 530,310 C534.0,305.7 539.0,302.3 544,298 C549.0,293.7 555.3,289.5 560,284 C564.7,278.5 566.5,271.7 572,265 C577.5,258.3 586.2,249.9 593,244 C599.8,238.1 608.2,234.0 613,229.5 C617.8,225.0 617.5,220.5 621.7,216.8 C625.9,213.1 632.5,210.5 638,207.5 C643.5,204.5 649.6,200.6 654.4,199 C659.2,197.4 663.1,198.9 667,198 C670.9,197.1 672.9,196.2 677.8,193.5 C682.7,190.8 689.8,185.3 696.4,181.8 C703.0,178.3 712.7,174.9 717.5,172.4 C722.3,169.9 722.9,168.4 725,167 C727.1,165.6 727.3,166.3 730,164 C732.7,161.7 735.2,157.5 741.4,153 C747.6,148.5 759.6,141.2 767,136.8 C774.4,132.4 780.2,128.8 785.7,126.3 C791.2,123.8 794.5,123.5 800,121.6 C805.5,119.6 813.7,116.4 818.5,114.6 C823.3,112.8 825.4,111.8 829,111 C832.6,110.2 834.7,110.0 840,110 C845.3,110.0 854.1,112.4 861,111 C867.9,109.6 875.4,100.1 881.6,101.7 C887.8,103.3 893.7,116.5 898.4,120.4 C903.1,124.3 904.9,123.4 910,125 C915.1,126.6 921.3,128.2 928.8,129.8 C936.3,131.4 949.1,134.2 955,134.8 C960.9,135.4 960.8,135.2 964.3,133.6 C967.8,132.0 971.3,127.9 976,125.4 C980.7,122.9 988.5,119.0 992.4,118.4 C996.3,117.8 995.9,120.4 999.4,122 C1002.9,123.6 1009.1,124.5 1013.4,127.8 C1017.7,131.1 1020.6,136.4 1025,141.8 C1029.4,147.2 1033.8,153.4 1040,160.2 C1046.2,167.0 1053.9,173.9 1062,182.4 C1070.1,190.9 1081.2,204.9 1088.5,211.3 C1095.8,217.7 1100.0,217.6 1106,220.7 C1112.0,223.8 1119.0,227.5 1124.7,230 C1130.4,232.5 1137.5,234.8 1140,235.8" fill="none" stroke="#b01414" stroke-width="1"/><line x1="462.5" y1="386.0" x2="462.5" y2="398.0" stroke="#26a826" stroke-width="1"/><rect x="461" y="389.0" width="3" height="6.0" fill="#dcffd0" stroke="#31c531" stroke-width="1"/><line x1="467.5" y1="382.0" x2="467.5" y2="399.0" stroke="#26a826" stroke-width="1"/><rect x="466" y="394.0" width="3" height="2.0" fill="#dcffd0" stroke="#31c531" stroke-width="1"/><line x1="473.5" y1="372.0" x2="473.5" y2="400.0" stroke="#26a826" stroke-width="1"/><rect x="472" y="373.0" width="3" height="22.6" fill="#000" stroke="#31c531" stroke-width="1"/><line x1="478.5" y1="356.0" x2="478.5" y2="375.0" stroke="#26a826" stroke-width="1"/><rect x="477" y="365.0" width="3" height="8.0" fill="#000" stroke="#31c531" stroke-width="1"/><line x1="484.5" y1="347.0" x2="484.5" y2="367.0" stroke="#26a826" stroke-width="1"/><rect x="483" y="355.0" width="3" height="9.0" fill="#000" stroke="#31c531" stroke-width="1"/><line x1="490.5" y1="344.0" x2="490.5" y2="366.0" stroke="#26a826" stroke-width="1"/><rect x="489" y="355.0" width="3" height="7.0" fill="#dcffd0" stroke="#31c531" stroke-width="1"/><line x1="495.5" y1="347.0" x2="495.5" y2="367.0" stroke="#26a826" stroke-width="1"/><rect x="494" y="350.0" width="3" height="11.6" fill="#000" stroke="#31c531" stroke-width="1"/><line x1="501.5" y1="258.0" x2="501.5" y2="352.0" stroke="#26a826" stroke-width="1"/><rect x="500" y="269.8" width="3" height="80.6" fill="#000" stroke="#31c531" stroke-width="1"/><line x1="506.5" y1="226.6" x2="506.5" y2="277.0" stroke="#26a826" stroke-width="1"/><rect x="505" y="237.0" width="3" height="33.0" fill="#000" stroke="#31c531" stroke-width="1"/><line x1="512.5" y1="209.0" x2="512.5" y2="240.0" stroke="#26a826" stroke-width="1"/><rect x="511" y="211.0" width="3" height="26.0" fill="#000" stroke="#31c531" stroke-width="1"/><line x1="518.5" y1="191.5" x2="518.5" y2="222.0" stroke="#26a826" stroke-width="1"/><line x1="516.5" y1="211.5" x2="520.5" y2="211.5" stroke="#31c531" stroke-width="1.4"/><line x1="523.5" y1="209.0" x2="523.5" y2="232.4" stroke="#26a826" stroke-width="1"/><rect x="522" y="211.0" width="3" height="11.6" fill="#dcffd0" stroke="#31c531" stroke-width="1"/><line x1="529.5" y1="219.6" x2="529.5" y2="241.8" stroke="#26a826" stroke-width="1"/><rect x="528" y="222.0" width="3" height="2.3" fill="#000" stroke="#31c531" stroke-width="1"/><line x1="534.5" y1="209.0" x2="534.5" y2="281.5" stroke="#26a826" stroke-width="1"/><rect x="533" y="223.0" width="3" height="36.0" fill="#dcffd0" stroke="#31c531" stroke-width="1"/><line x1="540.5" y1="246.4" x2="540.5" y2="269.8" stroke="#26a826" stroke-width="1"/><rect x="539" y="250.0" width="3" height="9.0" fill="#000" stroke="#31c531" stroke-width="1"/><line x1="546.5" y1="240.6" x2="546.5" y2="255.8" stroke="#26a826" stroke-width="1"/><rect x="545" y="246.4" width="3" height="3.6" fill="#000" stroke="#31c531" stroke-width="1"/><line x1="551.5" y1="216.0" x2="551.5" y2="255.8" stroke="#26a826" stroke-width="1"/><rect x="550" y="218.0" width="3" height="28.4" fill="#000" stroke="#31c531" stroke-width="1"/><line x1="557.5" y1="213.7" x2="557.5" y2="227.8" stroke="#26a826" stroke-width="1"/><line x1="555.5" y1="218.5" x2="559.5" y2="218.5" stroke="#31c531" stroke-width="1.4"/><line x1="562.5" y1="203.0" x2="562.5" y2="230.0" stroke="#26a826" stroke-width="1"/><rect x="561" y="219.0" width="3" height="5.0" fill="#dcffd0" stroke="#31c531" stroke-width="1"/><line x1="568.5" y1="198.5" x2="568.5" y2="224.3" stroke="#26a826" stroke-width="1"/><rect x="567" y="201.6" width="3" height="21.4" fill="#000" stroke="#31c531" stroke-width="1"/><line x1="574.5" y1="183.4" x2="574.5" y2="216.0" stroke="#26a826" stroke-width="1"/><rect x="573" y="189.0" width="3" height="13.0" fill="#000" stroke="#31c531" stroke-width="1"/><line x1="579.5" y1="177.5" x2="579.5" y2="224.3" stroke="#26a826" stroke-width="1"/><rect x="578" y="189.0" width="3" height="12.0" fill="#dcffd0" stroke="#31c531" stroke-width="1"/><line x1="585.5" y1="191.5" x2="585.5" y2="223.0" stroke="#26a826" stroke-width="1"/><rect x="584" y="200.0" width="3" height="10.0" fill="#dcffd0" stroke="#31c531" stroke-width="1"/><line x1="590.5" y1="190.4" x2="590.5" y2="216.0" stroke="#26a826" stroke-width="1"/><rect x="589" y="205.6" width="3" height="4.4" fill="#000" stroke="#31c531" stroke-width="1"/><line x1="596.5" y1="177.5" x2="596.5" y2="211.4" stroke="#26a826" stroke-width="1"/><rect x="595" y="198.5" width="3" height="7.1" fill="#000" stroke="#31c531" stroke-width="1"/><line x1="602.5" y1="189.0" x2="602.5" y2="213.7" stroke="#26a826" stroke-width="1"/><line x1="600.5" y1="199.0" x2="604.5" y2="199.0" stroke="#31c531" stroke-width="1.4"/><line x1="607.5" y1="181.0" x2="607.5" y2="206.7" stroke="#26a826" stroke-width="1"/><rect x="606" y="194.0" width="3" height="4.5" fill="#000" stroke="#31c531" stroke-width="1"/><line x1="613.5" y1="158.4" x2="613.5" y2="195.8" stroke="#26a826" stroke-width="1"/><rect x="612" y="162.0" width="3" height="32.6" fill="#000" stroke="#31c531" stroke-width="1"/><line x1="618.5" y1="135.0" x2="618.5" y2="175.0" stroke="#26a826" stroke-width="1"/><rect x="617" y="150.0" width="3" height="12.0" fill="#000" stroke="#31c531" stroke-width="1"/><line x1="624.5" y1="131.5" x2="624.5" y2="184.0" stroke="#26a826" stroke-width="1"/><rect x="623" y="150.0" width="3" height="26.0" fill="#dcffd0" stroke="#31c531" stroke-width="1"/><line x1="630.5" y1="170.0" x2="630.5" y2="197.0" stroke="#26a826" stroke-width="1"/><line x1="628.5" y1="176.5" x2="632.5" y2="176.5" stroke="#31c531" stroke-width="1.4"/><line x1="635.5" y1="172.4" x2="635.5" y2="190.0" stroke="#26a826" stroke-width="1"/><rect x="634" y="178.0" width="3" height="4.0" fill="#dcffd0" stroke="#31c531" stroke-width="1"/><line x1="641.5" y1="157.0" x2="641.5" y2="183.0" stroke="#26a826" stroke-width="1"/><rect x="640" y="158.0" width="3" height="24.0" fill="#000" stroke="#31c531" stroke-width="1"/><line x1="646.5" y1="158.0" x2="646.5" y2="186.4" stroke="#26a826" stroke-width="1"/><rect x="645" y="158.0" width="3" height="27.0" fill="#dcffd0" stroke="#31c531" stroke-width="1"/><line x1="652.5" y1="143.0" x2="652.5" y2="186.4" stroke="#26a826" stroke-width="1"/><rect x="651" y="144.0" width="3" height="41.0" fill="#000" stroke="#31c531" stroke-width="1"/><line x1="658.5" y1="134.0" x2="658.5" y2="201.6" stroke="#26a826" stroke-width="1"/><rect x="657" y="145.6" width="3" height="44.4" fill="#dcffd0" stroke="#31c531" stroke-width="1"/><line x1="663.5" y1="189.0" x2="663.5" y2="233.0" stroke="#26a826" stroke-width="1"/><rect x="662" y="190.0" width="3" height="22.0" fill="#dcffd0" stroke="#31c531" stroke-width="1"/><line x1="669.5" y1="198.0" x2="669.5" y2="216.8" stroke="#26a826" stroke-width="1"/><rect x="668" y="200.5" width="3" height="14.0" fill="#000" stroke="#31c531" stroke-width="1"/><line x1="674.5" y1="146.7" x2="674.5" y2="202.8" stroke="#26a826" stroke-width="1"/><rect x="673" y="148.0" width="3" height="52.5" fill="#000" stroke="#31c531" stroke-width="1"/><line x1="680.5" y1="139.7" x2="680.5" y2="167.8" stroke="#26a826" stroke-width="1"/><rect x="679" y="148.0" width="3" height="15.0" fill="#dcffd0" stroke="#31c531" stroke-width="1"/><line x1="686.5" y1="144.4" x2="686.5" y2="164.3" stroke="#26a826" stroke-width="1"/><rect x="685" y="148.0" width="3" height="15.0" fill="#000" stroke="#31c531" stroke-width="1"/><line x1="691.5" y1="132.7" x2="691.5" y2="156.0" stroke="#26a826" stroke-width="1"/><rect x="690" y="143.0" width="3" height="5.0" fill="#000" stroke="#31c531" stroke-width="1"/><line x1="697.5" y1="139.7" x2="697.5" y2="152.6" stroke="#26a826" stroke-width="1"/><rect x="696" y="143.0" width="3" height="6.0" fill="#dcffd0" stroke="#31c531" stroke-width="1"/><line x1="702.5" y1="143.0" x2="702.5" y2="157.0" stroke="#26a826" stroke-width="1"/><line x1="700.5" y1="148.5" x2="704.5" y2="148.5" stroke="#31c531" stroke-width="1.4"/><line x1="708.5" y1="143.0" x2="708.5" y2="160.7" stroke="#26a826" stroke-width="1"/><rect x="707" y="146.7" width="3" height="11.7" fill="#dcffd0" stroke="#31c531" stroke-width="1"/><line x1="714.5" y1="153.7" x2="714.5" y2="165.4" stroke="#26a826" stroke-width="1"/><rect x="713" y="159.0" width="3" height="5.0" fill="#dcffd0" stroke="#31c531" stroke-width="1"/><line x1="719.5" y1="130.4" x2="719.5" y2="166.6" stroke="#26a826" stroke-width="1"/><rect x="718" y="137.0" width="3" height="27.0" fill="#000" stroke="#31c531" stroke-width="1"/><line x1="725.5" y1="99.4" x2="725.5" y2="141.4" stroke="#26a826" stroke-width="1"/><rect x="724" y="127.4" width="3" height="10.6" fill="#000" stroke="#31c531" stroke-width="1"/><line x1="730.5" y1="118.0" x2="730.5" y2="137.0" stroke="#26a826" stroke-width="1"/><rect x="729" y="128.6" width="3" height="7.0" fill="#dcffd0" stroke="#31c531" stroke-width="1"/><line x1="736.5" y1="106.4" x2="736.5" y2="141.4" stroke="#26a826" stroke-width="1"/><rect x="735" y="107.6" width="3" height="26.8" fill="#000" stroke="#31c531" stroke-width="1"/><line x1="742.5" y1="72.5" x2="742.5" y2="112.0" stroke="#26a826" stroke-width="1"/><rect x="741" y="96.0" width="3" height="11.6" fill="#000" stroke="#31c531" stroke-width="1"/><line x1="747.5" y1="93.5" x2="747.5" y2="130.0" stroke="#26a826" stroke-width="1"/><rect x="746" y="96.0" width="3" height="22.0" fill="#dcffd0" stroke="#31c531" stroke-width="1"/><line x1="753.5" y1="111.0" x2="753.5" y2="124.0" stroke="#26a826" stroke-width="1"/><rect x="752" y="115.7" width="3" height="4.7" fill="#000" stroke="#31c531" stroke-width="1"/><line x1="758.5" y1="100.6" x2="758.5" y2="118.0" stroke="#26a826" stroke-width="1"/><rect x="757" y="103.0" width="3" height="12.7" fill="#000" stroke="#31c531" stroke-width="1"/><line x1="764.5" y1="87.7" x2="764.5" y2="105.0" stroke="#26a826" stroke-width="1"/><rect x="763" y="91.0" width="3" height="13.0" fill="#000" stroke="#31c531" stroke-width="1"/><line x1="770.5" y1="84.2" x2="770.5" y2="101.7" stroke="#26a826" stroke-width="1"/><rect x="769" y="91.0" width="3" height="9.6" fill="#dcffd0" stroke="#31c531" stroke-width="1"/><line x1="775.5" y1="97.0" x2="775.5" y2="115.7" stroke="#26a826" stroke-width="1"/><rect x="774" y="99.4" width="3" height="14.0" fill="#dcffd0" stroke="#31c531" stroke-width="1"/><line x1="781.5" y1="84.2" x2="781.5" y2="119.3" stroke="#26a826" stroke-width="1"/><rect x="780" y="85.4" width="3" height="28.0" fill="#000" stroke="#31c531" stroke-width="1"/><line x1="786.5" y1="76.0" x2="786.5" y2="113.0" stroke="#26a826" stroke-width="1"/><rect x="785" y="85.4" width="3" height="26.6" fill="#dcffd0" stroke="#31c531" stroke-width="1"/><line x1="792.5" y1="96.0" x2="792.5" y2="135.6" stroke="#26a826" stroke-width="1"/><rect x="791" y="104.0" width="3" height="9.4" fill="#000" stroke="#31c531" stroke-width="1"/><line x1="798.5" y1="94.7" x2="798.5" y2="122.8" stroke="#26a826" stroke-width="1"/><line x1="796.5" y1="105.5" x2="800.5" y2="105.5" stroke="#31c531" stroke-width="1.4"/><line x1="803.5" y1="84.2" x2="803.5" y2="113.4" stroke="#26a826" stroke-width="1"/><rect x="802" y="107.6" width="3" height="4.4" fill="#dcffd0" stroke="#31c531" stroke-width="1"/><line x1="809.5" y1="87.7" x2="809.5" y2="115.7" stroke="#26a826" stroke-width="1"/><rect x="808" y="92.4" width="3" height="19.6" fill="#000" stroke="#31c531" stroke-width="1"/><line x1="814.5" y1="84.2" x2="814.5" y2="96.0" stroke="#26a826" stroke-width="1"/><rect x="813" y="87.7" width="3" height="4.7" fill="#000" stroke="#31c531" stroke-width="1"/><line x1="820.5" y1="75.0" x2="820.5" y2="93.6" stroke="#26a826" stroke-width="1"/><rect x="819" y="87.7" width="3" height="4.7" fill="#dcffd0" stroke="#31c531" stroke-width="1"/><line x1="826.5" y1="83.0" x2="826.5" y2="104.0" stroke="#26a826" stroke-width="1"/><rect x="825" y="89.0" width="3" height="3.4" fill="#000" stroke="#31c531" stroke-width="1"/><line x1="831.5" y1="82.0" x2="831.5" y2="118.0" stroke="#26a826" stroke-width="1"/><rect x="830" y="90.0" width="3" height="15.0" fill="#dcffd0" stroke="#31c531" stroke-width="1"/><line x1="837.5" y1="87.7" x2="837.5" y2="127.4" stroke="#26a826" stroke-width="1"/><rect x="836" y="105.0" width="3" height="20.0" fill="#dcffd0" stroke="#31c531" stroke-width="1"/><line x1="842.5" y1="114.6" x2="842.5" y2="131.0" stroke="#26a826" stroke-width="1"/><rect x="841" y="122.8" width="3" height="2.2" fill="#000" stroke="#31c531" stroke-width="1"/><line x1="848.5" y1="112.2" x2="848.5" y2="127.4" stroke="#26a826" stroke-width="1"/><rect x="847" y="114.6" width="3" height="9.4" fill="#000" stroke="#31c531" stroke-width="1"/><line x1="854.5" y1="99.4" x2="854.5" y2="115.7" stroke="#26a826" stroke-width="1"/><rect x="853" y="106.4" width="3" height="7.0" fill="#000" stroke="#31c531" stroke-width="1"/><line x1="859.5" y1="104.0" x2="859.5" y2="126.3" stroke="#26a826" stroke-width="1"/><rect x="858" y="106.4" width="3" height="18.6" fill="#dcffd0" stroke="#31c531" stroke-width="1"/><line x1="865.5" y1="76.0" x2="865.5" y2="132.0" stroke="#26a826" stroke-width="1"/><rect x="864" y="87.7" width="3" height="37.3" fill="#000" stroke="#31c531" stroke-width="1"/><line x1="870.5" y1="60.8" x2="870.5" y2="90.0" stroke="#26a826" stroke-width="1"/><rect x="869" y="73.7" width="3" height="14.0" fill="#000" stroke="#31c531" stroke-width="1"/><line x1="887.5" y1="165.0" x2="887.5" y2="191.7" stroke="#26a826" stroke-width="1"/><rect x="886" y="181.0" width="3" height="3.7" fill="#000" stroke="#31c531" stroke-width="1"/><line x1="893.5" y1="162.5" x2="893.5" y2="182.0" stroke="#26a826" stroke-width="1"/><rect x="892" y="166.0" width="3" height="15.0" fill="#000" stroke="#31c531" stroke-width="1"/><line x1="898.5" y1="153.0" x2="898.5" y2="182.0" stroke="#26a826" stroke-width="1"/><rect x="897" y="167.0" width="3" height="14.0" fill="#dcffd0" stroke="#31c531" stroke-width="1"/><line x1="904.5" y1="148.5" x2="904.5" y2="187.0" stroke="#26a826" stroke-width="1"/><rect x="903" y="150.8" width="3" height="30.2" fill="#000" stroke="#31c531" stroke-width="1"/><line x1="910.5" y1="142.6" x2="910.5" y2="153.0" stroke="#26a826" stroke-width="1"/><rect x="909" y="146.0" width="3" height="4.8" fill="#000" stroke="#31c531" stroke-width="1"/><line x1="915.5" y1="124.0" x2="915.5" y2="148.5" stroke="#26a826" stroke-width="1"/><rect x="914" y="141.4" width="3" height="4.6" fill="#000" stroke="#31c531" stroke-width="1"/><line x1="921.5" y1="135.6" x2="921.5" y2="150.8" stroke="#26a826" stroke-width="1"/><rect x="920" y="142.6" width="3" height="2.4" fill="#dcffd0" stroke="#31c531" stroke-width="1"/><line x1="926.5" y1="132.0" x2="926.5" y2="148.5" stroke="#26a826" stroke-width="1"/><rect x="925" y="133.0" width="3" height="13.0" fill="#000" stroke="#31c531" stroke-width="1"/><line x1="932.5" y1="125.0" x2="932.5" y2="135.6" stroke="#26a826" stroke-width="1"/><rect x="931" y="126.0" width="3" height="8.4" fill="#000" stroke="#31c531" stroke-width="1"/><line x1="938.5" y1="124.0" x2="938.5" y2="155.5" stroke="#26a826" stroke-width="1"/><rect x="937" y="126.0" width="3" height="19.0" fill="#dcffd0" stroke="#31c531" stroke-width="1"/><line x1="943.5" y1="143.8" x2="943.5" y2="171.8" stroke="#26a826" stroke-width="1"/><rect x="942" y="145.0" width="3" height="9.3" fill="#dcffd0" stroke="#31c531" stroke-width="1"/><line x1="949.5" y1="142.6" x2="949.5" y2="157.8" stroke="#26a826" stroke-width="1"/><rect x="948" y="142.6" width="3" height="10.4" fill="#000" stroke="#31c531" stroke-width="1"/><line x1="954.5" y1="134.4" x2="954.5" y2="153.0" stroke="#26a826" stroke-width="1"/><rect x="953" y="136.8" width="3" height="5.8" fill="#000" stroke="#31c531" stroke-width="1"/><line x1="960.5" y1="129.0" x2="960.5" y2="147.6" stroke="#26a826" stroke-width="1"/><rect x="959" y="137.0" width="3" height="8.0" fill="#dcffd0" stroke="#31c531" stroke-width="1"/><line x1="966.5" y1="108.0" x2="966.5" y2="151.0" stroke="#26a826" stroke-width="1"/><rect x="965" y="112.6" width="3" height="33.8" fill="#000" stroke="#31c531" stroke-width="1"/><line x1="971.5" y1="75.0" x2="971.5" y2="115.0" stroke="#26a826" stroke-width="1"/><rect x="970" y="88.0" width="3" height="24.6" fill="#000" stroke="#31c531" stroke-width="1"/><line x1="977.5" y1="84.5" x2="977.5" y2="103.0" stroke="#26a826" stroke-width="1"/><rect x="976" y="85.0" width="3" height="2.6" fill="#000" stroke="#31c531" stroke-width="1"/><line x1="982.5" y1="78.7" x2="982.5" y2="102.0" stroke="#26a826" stroke-width="1"/><rect x="981" y="85.7" width="3" height="14.0" fill="#dcffd0" stroke="#31c531" stroke-width="1"/><line x1="988.5" y1="82.0" x2="988.5" y2="102.0" stroke="#26a826" stroke-width="1"/><rect x="987" y="95.0" width="3" height="4.7" fill="#000" stroke="#31c531" stroke-width="1"/><line x1="994.5" y1="90.4" x2="994.5" y2="104.4" stroke="#26a826" stroke-width="1"/><rect x="993" y="94.0" width="3" height="8.0" fill="#dcffd0" stroke="#31c531" stroke-width="1"/><line x1="999.5" y1="97.4" x2="999.5" y2="164.0" stroke="#26a826" stroke-width="1"/><rect x="998" y="102.0" width="3" height="60.8" fill="#dcffd0" stroke="#31c531" stroke-width="1"/><line x1="1005.5" y1="139.4" x2="1005.5" y2="174.5" stroke="#26a826" stroke-width="1"/><rect x="1004" y="140.6" width="3" height="22.2" fill="#000" stroke="#31c531" stroke-width="1"/><line x1="1010.5" y1="139.4" x2="1010.5" y2="167.5" stroke="#26a826" stroke-width="1"/><rect x="1009" y="141.8" width="3" height="19.8" fill="#dcffd0" stroke="#31c531" stroke-width="1"/><line x1="1016.5" y1="158.0" x2="1016.5" y2="181.5" stroke="#26a826" stroke-width="1"/><rect x="1015" y="160.5" width="3" height="17.5" fill="#dcffd0" stroke="#31c531" stroke-width="1"/><line x1="1022.5" y1="177.5" x2="1022.5" y2="235.8" stroke="#26a826" stroke-width="1"/><rect x="1021" y="178.7" width="3" height="49.0" fill="#dcffd0" stroke="#31c531" stroke-width="1"/><line x1="1027.5" y1="216.0" x2="1027.5" y2="237.0" stroke="#26a826" stroke-width="1"/><line x1="1025.5" y1="227.0" x2="1029.5" y2="227.0" stroke="#31c531" stroke-width="1.4"/><line x1="1033.5" y1="200.8" x2="1033.5" y2="230.0" stroke="#26a826" stroke-width="1"/><rect x="1032" y="206.7" width="3" height="19.8" fill="#000" stroke="#31c531" stroke-width="1"/><line x1="1038.5" y1="195.0" x2="1038.5" y2="226.5" stroke="#26a826" stroke-width="1"/><rect x="1037" y="205.5" width="3" height="12.8" fill="#dcffd0" stroke="#31c531" stroke-width="1"/><line x1="1044.5" y1="216.0" x2="1044.5" y2="237.0" stroke="#26a826" stroke-width="1"/><rect x="1043" y="218.3" width="3" height="3.5" fill="#dcffd0" stroke="#31c531" stroke-width="1"/><line x1="1050.5" y1="193.8" x2="1050.5" y2="234.7" stroke="#26a826" stroke-width="1"/><rect x="1049" y="221.8" width="3" height="7.0" fill="#dcffd0" stroke="#31c531" stroke-width="1"/><line x1="1055.5" y1="218.3" x2="1055.5" y2="240.5" stroke="#26a826" stroke-width="1"/><rect x="1054" y="227.7" width="3" height="9.3" fill="#dcffd0" stroke="#31c531" stroke-width="1"/><line x1="1061.5" y1="230.0" x2="1061.5" y2="260.3" stroke="#26a826" stroke-width="1"/><line x1="1059.5" y1="237.5" x2="1063.5" y2="237.5" stroke="#31c531" stroke-width="1.4"/><line x1="1066.5" y1="231.0" x2="1066.5" y2="259.2" stroke="#26a826" stroke-width="1"/><rect x="1065" y="237.0" width="3" height="4.7" fill="#dcffd0" stroke="#31c531" stroke-width="1"/><line x1="1072.5" y1="240.5" x2="1072.5" y2="258.0" stroke="#26a826" stroke-width="1"/><rect x="1071" y="242.8" width="3" height="2.4" fill="#dcffd0" stroke="#31c531" stroke-width="1"/><line x1="1078.5" y1="240.5" x2="1078.5" y2="282.5" stroke="#26a826" stroke-width="1"/><rect x="1077" y="245.2" width="3" height="22.2" fill="#dcffd0" stroke="#31c531" stroke-width="1"/><line x1="1083.5" y1="266.0" x2="1083.5" y2="290.7" stroke="#26a826" stroke-width="1"/><rect x="1082" y="267.4" width="3" height="3.4" fill="#dcffd0" stroke="#31c531" stroke-width="1"/><line x1="1089.5" y1="265.0" x2="1089.5" y2="275.5" stroke="#26a826" stroke-width="1"/><line x1="1087.5" y1="271.3" x2="1091.5" y2="271.3" stroke="#31c531" stroke-width="1.4"/><line x1="1094.5" y1="245.2" x2="1094.5" y2="274.3" stroke="#26a826" stroke-width="1"/><rect x="1093" y="247.5" width="3" height="23.3" fill="#000" stroke="#31c531" stroke-width="1"/><line x1="1100.5" y1="242.8" x2="1100.5" y2="249.8" stroke="#26a826" stroke-width="1"/><rect x="1099" y="245.2" width="3" height="2.3" fill="#000" stroke="#31c531" stroke-width="1"/><line x1="1106.5" y1="233.5" x2="1106.5" y2="249.8" stroke="#26a826" stroke-width="1"/><rect x="1105" y="245.0" width="3" height="3.7" fill="#dcffd0" stroke="#31c531" stroke-width="1"/><line x1="1111.5" y1="246.4" x2="1111.5" y2="259.2" stroke="#26a826" stroke-width="1"/><rect x="1110" y="248.7" width="3" height="9.3" fill="#dcffd0" stroke="#31c531" stroke-width="1"/><line x1="1117.5" y1="240.5" x2="1117.5" y2="260.3" stroke="#26a826" stroke-width="1"/><rect x="1116" y="241.7" width="3" height="15.8" fill="#000" stroke="#31c531" stroke-width="1"/><line x1="1122.5" y1="240.5" x2="1122.5" y2="274.3" stroke="#26a826" stroke-width="1"/><rect x="1121" y="241.7" width="3" height="21.0" fill="#dcffd0" stroke="#31c531" stroke-width="1"/><line x1="1128.5" y1="251.0" x2="1128.5" y2="281.4" stroke="#26a826" stroke-width="1"/><line x1="1126.5" y1="264.3" x2="1130.5" y2="264.3" stroke="#31c531" stroke-width="1.4"/><line x1="1134.5" y1="248.7" x2="1134.5" y2="266.2" stroke="#26a826" stroke-width="1"/><rect x="1133" y="253.3" width="3" height="10.5" fill="#000" stroke="#31c531" stroke-width="1"/><line x1="1139.5" y1="247.5" x2="1139.5" y2="261.5" stroke="#26a826" stroke-width="1"/><line x1="1137.5" y1="255.0" x2="1141.5" y2="255.0" stroke="#31c531" stroke-width="1.4"/><line x1="874" y1="72.5" x2="885" y2="72.5" stroke="#31c531" stroke-width="1" stroke-dasharray="3 2"/><path d="M462,383 C462.8,383.5 464.3,387.5 467,386 C469.7,384.5 475.2,376.8 478,374 C480.8,371.2 482.0,370.3 484,369 C486.0,367.7 488.0,367.3 490,366 C492.0,364.7 494.5,364.7 496,361 C497.5,357.3 497.8,350.8 499,344 C500.2,337.2 501.7,328.7 503,320 C504.3,311.3 505.8,298.7 507,292 C508.2,285.3 508.5,287.2 510,280 C511.5,272.8 513.8,256.2 516,249 C518.2,241.8 520.5,238.4 523,237 C525.5,235.6 528.7,239.3 531,240.6 C533.3,241.9 534.8,244.0 537,245 C539.2,246.0 541.5,247.7 544,246.4 C546.5,245.1 549.5,239.7 552,237 C554.5,234.3 556.8,231.9 559,230 C561.2,228.1 563.2,228.1 565,225.4 C566.8,222.7 568.4,216.8 570,213.7 C571.6,210.6 572.5,208.0 574.4,206.7 C576.3,205.3 579.2,205.2 581.4,205.6 C583.5,206.0 585.4,208.8 587.3,209 C589.2,209.2 590.7,207.7 593,206.7 C595.3,205.7 599.0,204.4 601.3,203 C603.6,201.6 605.2,200.6 607,198.5 C608.8,196.4 610.0,194.3 611.8,190.4 C613.6,186.5 615.1,177.4 618,175 C620.9,172.6 625.3,176.5 629,176 C632.7,175.5 637.2,172.2 640,172 C642.8,171.8 644.0,175.9 646,175 C648.0,174.1 650.0,165.9 652,166.6 C654.0,167.3 656.0,175.9 658,179.4 C660.0,182.9 662.3,185.7 664,187.6 C665.7,189.5 666.5,193.1 668.4,191 C670.3,188.9 673.3,178.3 675.4,174.8 C677.5,171.3 679.2,172.0 681,170 C682.8,168.0 684.0,165.3 686,163 C688.0,160.7 690.5,157.7 693,156 C695.5,154.3 698.5,152.8 701,152.6 C703.5,152.4 706.0,154.3 708,155 C710.0,155.7 711.2,157.4 713,157 C714.8,156.6 716.7,154.7 718.6,152.6 C720.5,150.5 722.3,147.0 724.5,144.4 C726.7,141.8 729.6,140.8 732,136.8 C734.4,132.8 736.3,123.5 739,120.4 C741.7,117.3 745.7,118.6 748.4,118 C751.1,117.4 752.9,118.5 755,117 C757.1,115.5 759.2,110.9 761.2,108.7 C763.2,106.5 764.7,104.4 767,104 C769.3,103.6 772.7,107.0 775,106.4 C777.3,105.8 778.8,101.2 781,100.6 C783.2,100.0 785.3,102.4 788,103 C790.7,103.6 794.9,103.2 797.4,104 C799.9,104.8 800.9,108.0 803,107.6 C805.1,107.2 807.4,103.6 810,101.7 C812.6,99.8 815.9,97.3 818.5,96 C821.1,94.7 823.4,93.8 825.5,94 C827.6,94.2 829.4,94.5 831.3,97 C833.2,99.5 834.7,106.0 837,108.7 C839.3,111.4 842.2,112.8 845,113 C847.8,113.2 851.5,109.7 854,110 C856.5,110.3 858.0,115.6 860,114.6 C862.0,113.6 863.2,108.1 865.7,104 C868.2,99.9 872.4,93.5 875,90 C877.6,86.5 879.4,79.1 881.6,83 C883.8,86.9 885.2,102.5 888,113.4 C890.8,124.3 895.5,142.7 898.4,148.5 C901.3,154.3 902.7,148.5 905.4,148.5 C908.1,148.5 912.1,149.1 914.8,148.5 C917.5,147.9 918.9,146.9 921.8,145 C924.7,143.1 929.6,137.0 932.3,136.8 C935.0,136.6 935.9,142.6 938,143.8 C940.1,145.0 942.2,144.1 945,143.8 C947.8,143.5 952.0,142.1 954.5,142 C957.0,141.9 957.7,145.4 959.7,143 C961.7,140.6 964.4,132.9 966.7,127.8 C969.0,122.7 971.8,116.3 973.7,112.6 C975.7,108.9 976.5,107.4 978.4,105.6 C980.3,103.8 983.3,102.8 985.4,102 C987.5,101.2 989.7,100.6 991.2,101 C992.8,101.4 993.3,101.5 994.7,104.4 C996.1,107.3 997.5,114.1 999.4,118.4 C1001.3,122.7 1004.3,126.1 1006.4,130 C1008.5,133.9 1010.3,136.7 1012.2,141.8 C1014.1,146.9 1016.2,154.0 1018,160.5 C1019.8,167.0 1021.5,175.2 1023,181 C1024.5,186.8 1024.9,191.9 1026.7,195 C1028.5,198.1 1031.4,197.9 1033.7,199.7 C1036.0,201.4 1038.4,203.0 1040.7,205.5 C1043.0,208.0 1045.2,211.9 1047.7,214.8 C1050.2,217.7 1053.1,220.5 1055.8,223 C1058.5,225.5 1061.3,227.7 1064,230 C1066.7,232.3 1069.7,233.9 1072.2,237 C1074.7,240.1 1076.5,244.8 1079.2,248.7 C1081.9,252.6 1085.8,259.1 1088.5,260.3 C1091.2,261.5 1093.2,257.1 1095.5,255.7 C1097.8,254.3 1099.8,252.8 1102.5,252.2 C1105.2,251.6 1109.3,252.0 1111.8,252.2 C1114.3,252.4 1115.2,252.7 1117.7,253.3 C1120.2,253.9 1124.3,255.3 1127,255.7 C1129.7,256.1 1131.7,255.9 1134,255.7 C1136.3,255.5 1139.8,254.7 1141,254.5" fill="none" stroke="#e4141a" stroke-width="1.6" stroke-linejoin="round"/><path d="M1028.8 241 L1033.3 237 L1037.8 241 L1035.5 243.7 L1031 243.7 Z" fill="#e4552e" stroke="#f0c0a8" stroke-width="0.6"/><path d="M1028.8 248.3 L1033.3 244.3 L1037.8 248.3 L1035.5 251.8 L1031 251.8 Z" fill="#2f7ac8" stroke="#a8c8e8" stroke-width="0.6"/><path d="M1135 52 L1145 52 L1140 57 Z" fill="#c8c8c8"/><line x1="1294" y1="67.4" x2="1298" y2="67.4" stroke="#c8c8c8" stroke-width="1"/><line x1="1294" y1="89.8" x2="1298" y2="89.8" stroke="#c8c8c8" stroke-width="1"/><line x1="1294" y1="112.2" x2="1298" y2="112.2" stroke="#c8c8c8" stroke-width="1"/><line x1="1294" y1="134.6" x2="1298" y2="134.6" stroke="#c8c8c8" stroke-width="1"/><line x1="1294" y1="157.0" x2="1298" y2="157.0" stroke="#c8c8c8" stroke-width="1"/><line x1="1294" y1="179.4" x2="1298" y2="179.4" stroke="#c8c8c8" stroke-width="1"/><line x1="1294" y1="201.8" x2="1298" y2="201.8" stroke="#c8c8c8" stroke-width="1"/><line x1="1294" y1="224.2" x2="1298" y2="224.2" stroke="#c8c8c8" stroke-width="1"/><line x1="1294" y1="246.6" x2="1298" y2="246.6" stroke="#c8c8c8" stroke-width="1"/><line x1="1294" y1="269.0" x2="1298" y2="269.0" stroke="#c8c8c8" stroke-width="1"/><line x1="1294" y1="291.4" x2="1298" y2="291.4" stroke="#c8c8c8" stroke-width="1"/><line x1="1294" y1="313.8" x2="1298" y2="313.8" stroke="#c8c8c8" stroke-width="1"/><line x1="1294" y1="336.2" x2="1298" y2="336.2" stroke="#c8c8c8" stroke-width="1"/><line x1="1294" y1="358.6" x2="1298" y2="358.6" stroke="#c8c8c8" stroke-width="1"/><line x1="1294" y1="381.0" x2="1298" y2="381.0" stroke="#c8c8c8" stroke-width="1"/><line x1="461.5" y1="403" x2="461.5" y2="407" stroke="#c8c8c8" stroke-width="1"/><line x1="551.5" y1="403" x2="551.5" y2="407" stroke="#c8c8c8" stroke-width="1"/><line x1="641" y1="403" x2="641" y2="407" stroke="#c8c8c8" stroke-width="1"/><line x1="730.5" y1="403" x2="730.5" y2="407" stroke="#c8c8c8" stroke-width="1"/><line x1="820" y1="403" x2="820" y2="407" stroke="#c8c8c8" stroke-width="1"/><line x1="909.5" y1="403" x2="909.5" y2="407" stroke="#c8c8c8" stroke-width="1"/><line x1="999.5" y1="403" x2="999.5" y2="407" stroke="#c8c8c8" stroke-width="1"/><line x1="1089" y1="403" x2="1089" y2="407" stroke="#c8c8c8" stroke-width="1"/></svg></div><div class="t" style="left:1298px;top:61.40px;font-size:9px;line-height:12px;color:#d4d4d4;font-weight:normal;-webkit-text-stroke:0;">3.9890</div><div class="t" style="left:1298px;top:83.80px;font-size:9px;line-height:12px;color:#d4d4d4;font-weight:normal;-webkit-text-stroke:0;">3.9520</div><div class="t" style="left:1298px;top:106.20px;font-size:9px;line-height:12px;color:#d4d4d4;font-weight:normal;-webkit-text-stroke:0;">3.9150</div><div class="t" style="left:1298px;top:128.60px;font-size:9px;line-height:12px;color:#d4d4d4;font-weight:normal;-webkit-text-stroke:0;">3.8780</div><div class="t" style="left:1298px;top:151.00px;font-size:9px;line-height:12px;color:#d4d4d4;font-weight:normal;-webkit-text-stroke:0;">3.8410</div><div class="t" style="left:1298px;top:173.40px;font-size:9px;line-height:12px;color:#d4d4d4;font-weight:normal;-webkit-text-stroke:0;">3.8040</div><div class="t" style="left:1298px;top:195.80px;font-size:9px;line-height:12px;color:#d4d4d4;font-weight:normal;-webkit-text-stroke:0;">3.7670</div><div class="t" style="left:1298px;top:218.20px;font-size:9px;line-height:12px;color:#d4d4d4;font-weight:normal;-webkit-text-stroke:0;">3.7300</div><div class="t" style="left:1298px;top:240.60px;font-size:9px;line-height:12px;color:#d4d4d4;font-weight:normal;-webkit-text-stroke:0;">3.6930</div><div class="t" style="left:1298px;top:263.00px;font-size:9px;line-height:12px;color:#d4d4d4;font-weight:normal;-webkit-text-stroke:0;">3.6560</div><div class="t" style="left:1298px;top:285.40px;font-size:9px;line-height:12px;color:#d4d4d4;font-weight:normal;-webkit-text-stroke:0;">3.6190</div><div class="t" style="left:1298px;top:307.80px;font-size:9px;line-height:12px;color:#d4d4d4;font-weight:normal;-webkit-text-stroke:0;">3.5820</div><div class="t" style="left:1298px;top:330.20px;font-size:9px;line-height:12px;color:#d4d4d4;font-weight:normal;-webkit-text-stroke:0;">3.5450</div><div class="t" style="left:1298px;top:352.60px;font-size:9px;line-height:12px;color:#d4d4d4;font-weight:normal;-webkit-text-stroke:0;">3.5080</div><div class="t" style="left:1298px;top:375.00px;font-size:9px;line-height:12px;color:#d4d4d4;font-weight:normal;-webkit-text-stroke:0;">3.4710</div><div class="t" style="left:1296px;top:250.50px;font-size:9px;line-height:11px;color:#2e2e2e;font-weight:normal;-webkit-text-stroke:0;"><span style="background:#8e9cac;color:#13202e;padding:0 4px 0 2px">3.6778</span></div><div class="t" style="right:50px;top:69.50px;font-size:9px;line-height:12px;color:#cccc55;font-weight:normal;-webkit-text-stroke:0;">100.0</div><div class="t" style="right:50px;top:231.00px;font-size:9px;line-height:12px;color:#cccc55;font-weight:normal;-webkit-text-stroke:0;">61.8</div><div class="t" style="right:50px;top:281.00px;font-size:9px;line-height:12px;color:#cccc55;font-weight:normal;-webkit-text-stroke:0;">50.0</div><div class="t" style="right:50px;top:331.00px;font-size:9px;line-height:12px;color:#cccc55;font-weight:normal;-webkit-text-stroke:0;">38.2</div><div class="t" style="left:461.5px;top:405.50px;font-size:9px;line-height:12px;color:#d4d4d4;font-weight:normal;-webkit-text-stroke:0;">7 Aug 2025</div><div class="t" style="left:551.5px;top:405.50px;font-size:9px;line-height:12px;color:#d4d4d4;font-weight:normal;-webkit-text-stroke:0;">7 Aug 22:00</div><div class="t" style="left:641px;top:405.50px;font-size:9px;line-height:12px;color:#d4d4d4;font-weight:normal;-webkit-text-stroke:0;">8 Aug 14:00</div><div class="t" style="left:730.5px;top:405.50px;font-size:9px;line-height:12px;color:#d4d4d4;font-weight:normal;-webkit-text-stroke:0;">9 Aug 06:00</div><div class="t" style="left:820px;top:405.50px;font-size:9px;line-height:12px;color:#d4d4d4;font-weight:normal;-webkit-text-stroke:0;">9 Aug 22:00</div><div class="t" style="left:909.5px;top:405.50px;font-size:9px;line-height:12px;color:#d4d4d4;font-weight:normal;-webkit-text-stroke:0;">10 Aug 18:00</div><div class="t" style="left:999.5px;top:405.50px;font-size:9px;line-height:12px;color:#d4d4d4;font-weight:normal;-webkit-text-stroke:0;">11 Aug 10:00</div><div class="t" style="left:1089px;top:405.50px;font-size:9px;line-height:12px;color:#d4d4d4;font-weight:normal;-webkit-text-stroke:0;">12 Aug 02:00</div><svg class="s" style="left:466px;top:58px;" width="12" height="8" viewBox="0 0 12 8"><rect x="0" y="0" width="6" height="8" fill="#fbd0c8"/><rect x="6" y="0" width="6" height="8" fill="#c0e4fa"/><g stroke-width="1"><path d="M1.5 1.8 H5.5 M1.5 4 H5.5 M1.5 6.3 H5.5" stroke="#d88a80"/><path d="M6.5 1.8 H10.5 M6.5 4 H10.5 M6.5 6.3 H10.5" stroke="#6a9cc8"/></g></svg><svg class="s" style="left:485px;top:57px;" width="13" height="10" viewBox="0 0 13 10"><path d="M0.4 1 H2.6 V4 H5.3 V9 H0.4 Z" fill="#fbd0c8"/><path d="M12.4 1 H10.2 V4 H7.3 V9 H12.4 Z" fill="#a8dcfa"/><rect x="4.5" y="1.5" width="3.5" height="1.2" fill="#f0e8d8"/></svg><div class="t" style="left:502.5px;top:56.50px;font-size:9.2px;line-height:12px;color:#e4e4e4;font-weight:normal;-webkit-text-stroke:0;transform:scaleX(0.89);transform-origin:left center;">SUIUSD, H1:&nbsp; Sui vs US Dollar</div><div class="b" style="left:464px;top:72px;width:42px;height:18px;background:#e83c3c"></div><div class="b" style="left:467px;top:88px;width:36px;height:1px;background:#ff8080;opacity:0.5"></div><div class="t" style="left:474px;top:74.00px;font-size:10.5px;line-height:14px;color:#ffd8d8;font-weight:normal;transform:scaleX(0.85);transform-origin:left center;">SELL</div><div class="b" style="left:598px;top:72px;width:42px;height:18px;background:#e83c3c"></div><div class="b" style="left:601px;top:88px;width:36px;height:1px;background:#ff8080;opacity:0.5"></div><div class="t" style="left:609.5px;top:74.00px;font-size:10.5px;line-height:14px;color:#ffd8d8;font-weight:normal;transform:scaleX(0.87);transform-origin:left center;">BUY</div><div class="b" style="left:507px;top:71px;width:90px;height:18px;background:#fff;border:1px solid #000;box-sizing:border-box"></div><div class="b" style="left:524px;top:72px;width:1px;height:16px;background:#d0d0d0"></div><div class="b" style="left:580px;top:72px;width:1px;height:16px;background:#d0d0d0"></div><svg class="s" style="left:513px;top:78px;" width="6" height="4" viewBox="0 0 6 4"><path d="M0 0 H6 L3 3.5 Z" fill="#111"/></svg><svg class="s" style="left:585px;top:77px;" width="6" height="4" viewBox="0 0 6 4"><path d="M0 3.5 H6 L3 0 Z" fill="#111"/></svg><div class="t" style="right:766px;top:73.50px;font-size:11px;line-height:14px;color:#222;font-weight:normal;">500</div><div class="b" style="left:464px;top:90px;width:88px;height:32px;background:linear-gradient(#f04848,#c81414)"></div><div class="b" style="left:553px;top:90px;width:87px;height:32px;background:linear-gradient(#f04848,#c81414)"></div><div class="t" style="left:483px;top:105.00px;font-size:11px;line-height:14px;color:#fff;font-weight:bold;">3.67</div><div class="t" style="left:508px;top:92.50px;font-size:27px;line-height:28px;color:#fff;font-weight:normal;">78</div><div class="t" style="left:571px;top:105.00px;font-size:11px;line-height:14px;color:#fff;font-weight:bold;">3.67</div><div class="t" style="left:596px;top:92.50px;font-size:27px;line-height:28px;color:#fff;font-weight:normal;">86</div><div class="b" style="left:460px;top:421px;width:878px;height:20px;background:#f0f0f0"></div><div class="b" style="left:460px;top:421px;width:1px;height:20px;background:#c8c8c8"></div><div class="b" style="left:463px;top:420px;width:68px;height:16px;background:#fff;border:1px solid #3a3a3a;border-top:none"></div><div class="t" style="left:471.5px;top:423.00px;font-size:10.3px;line-height:14px;color:#2e2e2e;font-weight:normal;transform:scaleX(0.91);transform-origin:left center;">SUIUSD,H1</div><div class="t" style="left:542.5px;top:423.00px;font-size:10.3px;line-height:14px;color:#8c8c8c;font-weight:normal;transform:scaleX(0.91);transform-origin:left center;">SUIUSD,H1</div><div class="b" style="left:604px;top:423px;width:1px;height:13px;background:#a8a8a8"></div><div class="t" style="left:614.5px;top:423.00px;font-size:10.3px;line-height:14px;color:#8c8c8c;font-weight:normal;transform:scaleX(0.91);transform-origin:left center;">XAUUSD,M1</div><div class="b" style="left:683px;top:423px;width:1px;height:13px;background:#a8a8a8"></div><div class="t" style="left:693.5px;top:423.00px;font-size:10.3px;line-height:14px;color:#8c8c8c;font-weight:normal;transform:scaleX(0.91);transform-origin:left center;">USDJPY,H1</div><svg class="s" style="left:1305px;top:425px;" width="30" height="9" viewBox="0 0 30 9"><path d="M4.5 1 L1.5 4.5 L4.5 8 Z" fill="#c0c0c0"/><path d="M19.5 1 L22.5 4.5 L19.5 8 Z" fill="#c0c0c0"/></svg><div class="b" style="left:6px;top:441px;width:1332px;height:159px;background:#fff"></div><div class="b" style="left:6px;top:441px;width:1332px;height:1px;background:#d0d0d0"></div><div class="b" style="left:6px;top:441px;width:18px;height:159px;background:#a9bfd9"></div><svg class="s" style="left:11px;top:446px;" width="9" height="9" viewBox="0 0 9 9"><path d="M1 1 L8 8 M8 1 L1 8" stroke="#1a1a1a" stroke-width="1.4"/></svg><div class="b" style="left:182px;top:442px;width:1px;height:19px;background:#d8d8d8"></div><div class="b" style="left:182px;top:461px;width:1px;height:16px;background:#ececec"></div><div class="b" style="left:291px;top:442px;width:1px;height:19px;background:#d8d8d8"></div><div class="b" style="left:291px;top:461px;width:1px;height:16px;background:#ececec"></div><div class="b" style="left:414px;top:442px;width:1px;height:19px;background:#d8d8d8"></div><div class="b" style="left:414px;top:461px;width:1px;height:16px;background:#ececec"></div><div class="b" style="left:535px;top:442px;width:1px;height:19px;background:#d8d8d8"></div><div class="b" style="left:535px;top:461px;width:1px;height:16px;background:#ececec"></div><div class="b" style="left:656px;top:442px;width:1px;height:19px;background:#d8d8d8"></div><div class="b" style="left:656px;top:461px;width:1px;height:16px;background:#ececec"></div><div class="b" style="left:778px;top:442px;width:1px;height:19px;background:#d8d8d8"></div><div class="b" style="left:778px;top:461px;width:1px;height:16px;background:#ececec"></div><div class="b" style="left:898px;top:442px;width:1px;height:19px;background:#d8d8d8"></div><div class="b" style="left:898px;top:461px;width:1px;height:16px;background:#ececec"></div><div class="b" style="left:1020px;top:442px;width:1px;height:19px;background:#d8d8d8"></div><div class="b" style="left:1020px;top:461px;width:1px;height:16px;background:#ececec"></div><div class="b" style="left:1141px;top:442px;width:1px;height:19px;background:#d8d8d8"></div><div class="b" style="left:1141px;top:461px;width:1px;height:16px;background:#ececec"></div><div class="t" style="left:31px;top:444.50px;font-size:10.3px;line-height:14px;color:#2e2e2e;font-weight:normal;">Symbol</div><svg class="s" style="left:81px;top:448px;" width="7" height="5" viewBox="0 0 7 5"><path d="M0 4 H7 L3.5 0 Z" fill="#111"/></svg><div class="t" style="left:189px;top:444.50px;font-size:10.3px;line-height:14px;color:#2e2e2e;font-weight:normal;">Ticket</div><div class="t" style="right:934px;top:444.50px;font-size:10.3px;line-height:14px;color:#2e2e2e;font-weight:normal;">Time</div><div class="t" style="right:812.5px;top:444.50px;font-size:10.3px;line-height:14px;color:#2e2e2e;font-weight:normal;">Type</div><div class="t" style="right:692px;top:444.50px;font-size:10.3px;line-height:14px;color:#2e2e2e;font-weight:normal;">Volume</div><div class="t" style="right:570.5px;top:444.50px;font-size:10.3px;line-height:14px;color:#2e2e2e;font-weight:normal;">Price</div><div class="t" style="right:449px;top:444.50px;font-size:10.3px;line-height:14px;color:#2e2e2e;font-weight:normal;">S / L</div><div class="t" style="right:328.5px;top:444.50px;font-size:10.3px;line-height:14px;color:#2e2e2e;font-weight:normal;">T / P</div><div class="t" style="right:207px;top:444.50px;font-size:10.3px;line-height:14px;color:#2e2e2e;font-weight:normal;">Price</div><div class="t" style="right:10.5px;top:444.50px;font-size:10.3px;line-height:14px;color:#2e2e2e;font-weight:normal;">Profit</div><svg class="s" style="left:28px;top:461px;" width="11" height="15" viewBox="0 0 11 15"><rect x="0.75" y="0.75" width="9" height="13" rx="2" fill="#fff" stroke="#4a8ad0" stroke-width="1.2"/><path d="M3.5 5 H7 M3.5 7.5 H7" stroke="#4a8ad0" stroke-width="0.9"/></svg><div class="t" style="left:44px;top:462.80px;font-size:10.3px;line-height:14px;color:#2e2e2e;font-weight:normal;">suiusd</div><div class="t" style="left:186px;top:462.80px;font-size:10.3px;line-height:14px;color:#2e2e2e;font-weight:normal;">1711612</div><div class="t" style="right:930.5px;top:462.80px;font-size:10.3px;line-height:14px;color:#2e2e2e;font-weight:normal;">2025.08.11 16:12:36</div><div class="t" style="right:812.5px;top:462.80px;font-size:10.3px;line-height:14px;color:#2e2e2e;font-weight:normal;">buy</div><div class="t" style="right:692px;top:462.80px;font-size:10.3px;line-height:14px;color:#2e2e2e;font-weight:normal;">10K</div><div class="t" style="right:570.5px;top:462.80px;font-size:10.3px;line-height:14px;color:#2e2e2e;font-weight:normal;">3.6983</div><div class="t" style="right:206.5px;top:462.80px;font-size:10.3px;line-height:14px;color:#2e2e2e;font-weight:normal;">3.6778</div><div class="t" style="right:23px;top:462.80px;font-size:10.3px;line-height:14px;color:#dd3a3a;font-weight:normal;">-205.00</div><svg class="s" style="left:1327px;top:465px;" width="9" height="9" viewBox="0 0 9 9"><path d="M1 1 L8 8 M8 1 L1 8" stroke="#8a8a8a" stroke-width="1.2"/></svg><div class="b" style="left:25px;top:477px;width:1313px;height:17px;background:#0a78d7"></div><div class="b" style="left:1141px;top:477px;width:1px;height:17px;background:#5aa8ea"></div><svg class="s" style="left:27px;top:479.5px;" width="12" height="12" viewBox="0 0 12 12"><circle cx="6.3" cy="6" r="4.4" fill="none" stroke="#0b1f45" stroke-width="1.3"/><line x1="3.8" y1="6" x2="8.8" y2="6" stroke="#0b1f45" stroke-width="1.3"/></svg><div class="t" style="left:44.5px;top:478.50px;font-size:10.5px;line-height:14px;color:#fff;font-weight:bold;">Balance: 23 277.69 USD&nbsp; Equity: 23 070.15&nbsp; Margin: 3 698.30&nbsp; Free Margin: 19 371.85&nbsp; Margin Level: 623.80 %</div><div class="t" style="right:23.5px;top:478.50px;font-size:10.5px;line-height:14px;color:#fff;font-weight:bold;">-207.54</div><svg class="s" style="left:1322px;top:478px;" width="16" height="16" viewBox="0 0 16 16"><circle cx="8" cy="8" r="7.3" fill="#fff"/><path d="M8 3.5 V12.5 M3.5 8 H12.5" stroke="#1a3ad0" stroke-width="1.8"/></svg>
</body></html>
